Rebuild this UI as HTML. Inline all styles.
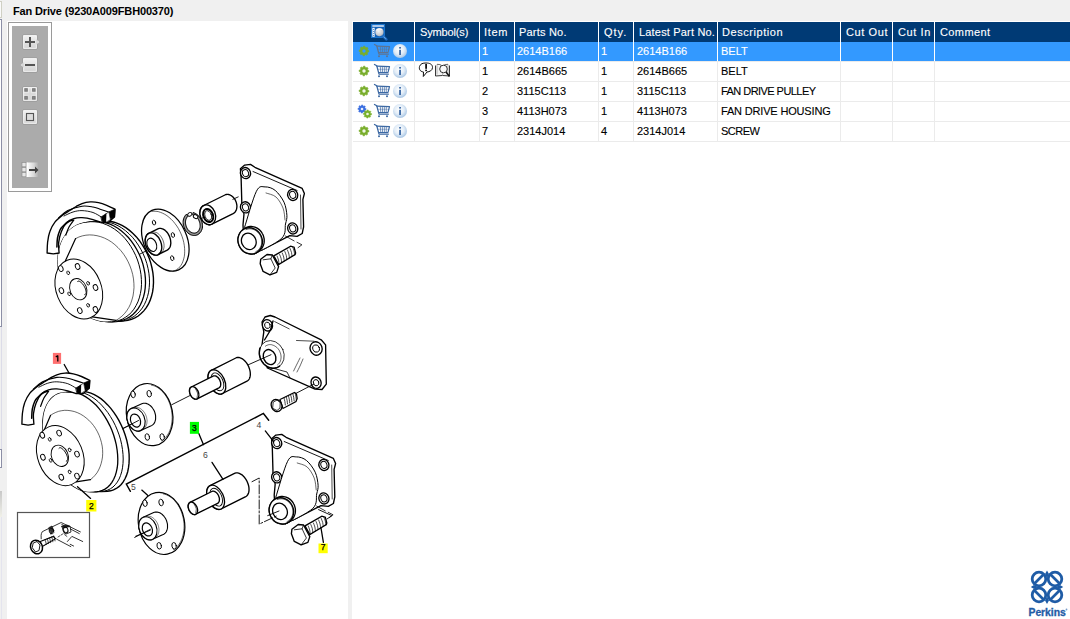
<!DOCTYPE html>
<html><head><meta charset="utf-8">
<style>
*{margin:0;padding:0;box-sizing:border-box}
html,body{width:1070px;height:619px;overflow:hidden;background:#f0f0f0;font-family:"Liberation Sans",sans-serif}
.a{position:absolute}
#title{left:13px;top:5px;font-weight:bold;font-size:11px;letter-spacing:-0.15px;color:#000;white-space:nowrap;line-height:13px}
#lp{left:7px;top:21px;width:341px;height:598px;background:#fff}
#rp{left:352px;top:21px;width:718px;height:598px;background:#fff}
#tb{left:8px;top:22px;width:44px;height:170px;border:1px solid #9a9a9a;background:#fff}
#tbg{left:12px;top:26px;width:36px;height:162px;background:#ababab}
.hdr{left:353px;top:22px;width:717px;height:20px;background:#003a75}
.sel{left:353px;top:42px;width:717px;height:19px;background:#3399ff}
.hl{position:absolute;height:1px;left:353px;width:717px;background:#ebebeb}
.vl{position:absolute;width:1px;background:#ebebeb}
.vw{position:absolute;width:1px;background:#e6ecf3}
.th{position:absolute;top:22px;color:#fff;font-size:11px;line-height:20px;white-space:nowrap;-webkit-text-stroke:0.12px #fff}
.td{position:absolute;color:#000;font-size:11px;line-height:19px;white-space:nowrap;-webkit-text-stroke:0.12px currentColor}
.w{color:#fff}
</style></head><body>
<div class="a" style="left:0;top:1px;width:2px;height:17px;border:1px solid #d0d0c4;border-left:none;background:#fafafa"></div>
<div class="a" style="left:0;top:19px;width:2px;height:308px;border-right:1px solid #8c8fa6;border-top:1px solid #8c8fa6;border-bottom:1px solid #8c8fa6;background:#fff"></div>
<div class="a" style="left:1px;top:327px;width:1px;height:123px;background:#dcdce8"></div>
<div class="a" style="left:0;top:449px;width:2px;height:19px;border:1px solid #8c8fa6;border-left:none;background:#fff"></div>
<div class="a" style="left:0;top:491px;width:2px;height:26px;background:linear-gradient(#c8c8c8,#f0f0e8)"></div>
<div class="a" style="left:1px;top:517px;width:1px;height:102px;background:#e4e4ee"></div>
<div id="title" class="a">Fan Drive (9230A009FBH00370)</div>
<div id="lp" class="a"></div>
<div id="rp" class="a"></div>
<svg class="a" style="left:0;top:0" width="350" height="619" viewBox="0 0 350 619" stroke="#000" stroke-linecap="round"><path d="M102.4,220.9 L106.3,220.8 L110.2,221.3 L114.2,222.2 L118.1,223.6 L122.0,225.4 L125.8,227.7 L129.5,230.4 L133.0,233.5 L136.4,236.9 L139.5,240.7 L142.3,244.8 L144.9,249.1 L147.2,253.6 L149.2,258.3 L150.8,263.1 L152.0,268.0 L152.9,272.9 L153.4,277.8 L153.5,282.6 L153.2,287.4 L152.6,291.9 L151.5,296.3 L150.1,300.4 L148.4,304.2 L146.3,307.7 L143.8,310.9 L141.1,313.6 L138.2,316.0 L134.9,317.9 L131.5,319.4 L127.9,320.4 L124.2,320.9 L120.2,321.2 L116.3,321.3 L112.4,320.8 L108.4,319.9 L104.5,318.5 L100.6,316.7 L96.8,314.4 L93.1,311.7 L89.6,308.6 L86.2,305.2 L83.1,301.4 L80.3,297.3 L77.7,293.0 L75.4,288.5 L73.4,283.8 L71.8,279.0 L70.6,274.1 L69.7,269.2 L69.2,264.3 L69.1,259.5 L69.4,254.7 L70.0,250.2 L71.1,245.8 L72.5,241.7 L74.2,237.9 L76.3,234.4 L78.8,231.2 L81.5,228.5 L84.4,226.1 L87.7,224.2 L91.1,222.7 L94.7,221.7 L98.4,221.2Z" fill="#fff" stroke-width="1.4" /><path d="M98.4,221.2 L102.3,221.1 L106.2,221.6 L110.2,222.5 L114.1,223.9 L118.0,225.7 L121.8,228.0 L125.5,230.7 L129.0,233.8 L132.4,237.2 L135.5,241.0 L138.3,245.1 L140.9,249.4 L143.2,253.9 L145.2,258.6 L146.8,263.4 L148.0,268.3 L148.9,273.2 L149.4,278.1 L149.5,282.9 L149.2,287.7 L148.6,292.2 L147.5,296.6 L146.1,300.7 L144.4,304.5 L142.3,308.0 L139.8,311.2 L137.1,313.9 L134.2,316.3 L130.9,318.2 L127.5,319.7 L123.9,320.7 L120.2,321.2 L116.2,321.5 L112.3,321.6 L108.4,321.1 L104.4,320.2 L100.5,318.8 L96.6,317.0 L92.8,314.7 L89.1,312.0 L85.6,308.9 L82.2,305.5 L79.1,301.7 L76.3,297.6 L73.7,293.3 L71.4,288.8 L69.4,284.1 L67.8,279.3 L66.6,274.4 L65.7,269.5 L65.2,264.6 L65.1,259.8 L65.4,255.0 L66.0,250.5 L67.1,246.1 L68.5,242.0 L70.2,238.2 L72.3,234.7 L74.8,231.5 L77.5,228.8 L80.4,226.4 L83.7,224.5 L87.1,223.0 L90.7,222.0 L94.4,221.5Z" fill="#fff" stroke-width="1.0" /><path d="M94.4,221.5 L98.3,221.4 L102.2,221.9 L106.2,222.8 L110.1,224.2 L114.0,226.0 L117.8,228.3 L121.5,231.0 L125.0,234.1 L128.4,237.5 L131.5,241.3 L134.3,245.4 L136.9,249.7 L139.2,254.2 L141.2,258.9 L142.8,263.7 L144.0,268.6 L144.9,273.5 L145.4,278.4 L145.5,283.2 L145.2,288.0 L144.6,292.5 L143.5,296.9 L142.1,301.0 L140.4,304.8 L138.3,308.3 L135.8,311.5 L133.1,314.2 L130.2,316.6 L126.9,318.5 L123.5,320.0 L119.9,321.0 L116.2,321.5 L112.2,321.8 L108.3,321.9 L104.4,321.4 L100.4,320.5 L96.5,319.1 L92.6,317.3 L88.8,315.0 L85.1,312.3 L81.6,309.2 L78.2,305.8 L75.1,302.0 L72.3,297.9 L69.7,293.6 L67.4,289.1 L65.4,284.4 L63.8,279.6 L62.6,274.7 L61.7,269.8 L61.2,264.9 L61.1,260.1 L61.4,255.3 L62.0,250.8 L63.1,246.4 L64.5,242.3 L66.2,238.5 L68.3,235.0 L70.8,231.8 L73.5,229.1 L76.4,226.7 L79.7,224.8 L83.1,223.3 L86.7,222.3 L90.4,221.8Z" fill="#fff" stroke-width="1.3" /><path d="M91.1,221.8 L94.9,221.8 L98.9,222.3 L102.8,223.3 L106.7,224.8 L110.6,226.7 L114.4,229.0 L118.1,231.8 L121.6,234.9 L124.9,238.4 L128.0,242.3 L130.8,246.4 L133.3,250.7 L135.6,255.3 L137.5,260.0 L139.0,264.8 L140.2,269.7 L141.0,274.6 L141.4,279.5 L141.5,284.3 L141.2,289.0 L140.4,293.6 L139.3,297.9 L137.9,301.9 L136.0,305.7 L133.9,309.2 L131.4,312.3 L128.7,315.0 L125.6,317.2 L122.4,319.1 L118.9,320.5 L115.3,321.4 L111.5,321.8 L107.7,321.6 L103.8,321.5 L100.0,321.0 L96.1,320.0 L92.2,318.6 L88.4,316.7 L84.6,314.3 L81.0,311.6 L77.5,308.5 L74.3,305.0 L71.2,301.2 L68.4,297.1 L65.9,292.8 L63.7,288.3 L61.8,283.7 L60.3,278.9 L59.1,274.0 L58.3,269.2 L57.8,264.3 L57.8,259.5 L58.1,254.9 L58.8,250.4 L59.9,246.1 L61.4,242.1 L63.2,238.4 L65.3,235.0 L67.7,231.9 L70.4,229.2 L73.4,227.0 L76.6,225.2 L80.0,223.8 L83.6,222.9 L87.3,222.4Z" fill="#fff" stroke-width="1.0" /><ellipse cx="97.5" cy="272" rx="37.5" ry="51.3" transform="rotate(-22 97.5 272)" fill="#fff" stroke="none"/><path d="M75.6,238.6 L78.9,237.0 L82.3,235.9 L85.9,235.2 L89.6,234.9 L93.3,235.1 L97.0,235.7 L100.8,236.7 L104.5,238.1 L108.1,239.9 L111.6,242.1 L114.9,244.7 L118.0,247.6 L121.0,250.8 L123.7,254.3 L126.1,258.0 L128.2,261.9 L130.0,266.0 L131.5,270.2 L132.7,274.5 L133.5,278.9 L133.9,283.3 L134.0,287.6 L133.6,291.9 L133.0,296.0 L131.9,300.0 L130.6,303.8 L128.9,307.3 L126.8,310.6 L124.5,313.6 L121.9,316.2 L119.0,318.5 L116.0,320.4 L92.3,316.9 L90.3,317.8 L88.2,318.5 L86.0,318.9 L83.7,318.9 L81.4,318.8 L79.0,318.3 L76.7,317.5 L74.4,316.5 L72.1,315.2 L69.9,313.6 L67.8,311.8 L65.7,309.8 L63.8,307.6 L62.1,305.2 L60.5,302.7 L59.1,300.0 L57.9,297.2 L56.8,294.4 L56.0,291.5 L55.4,288.5 L55.1,285.6 L54.9,282.7 L55.0,279.8 L55.3,277.1 L55.9,274.5 L56.6,272.0 L57.6,269.6 L58.8,267.5 L60.2,265.5 L61.7,263.8 L63.5,262.4 L65.3,261.1Z" fill="#fff" stroke="none"/><path d="M75.6,238.6 L78.9,237.0 L82.3,235.9 L85.9,235.2 L89.6,234.9 L93.3,235.1 L97.0,235.7 L100.8,236.7 L104.5,238.1 L108.1,239.9 L111.6,242.1 L114.9,244.7 L118.0,247.6 L121.0,250.8 L123.7,254.3 L126.1,258.0 L128.2,261.9 L130.0,266.0 L131.5,270.2 L132.7,274.5 L133.5,278.9 L133.9,283.3 L134.0,287.6 L133.6,291.9 L133.0,296.0 L131.9,300.0 L130.6,303.8 L128.9,307.3 L126.8,310.6 L124.5,313.6 L121.9,316.2 L119.0,318.5 L116.0,320.4" fill="none" stroke-width="0.6" /><path d="M116.0,320.4 L92.3,316.9" fill="none" stroke-width="1.2" /><path d="M65.3,261.1 L75.6,238.6" fill="none" stroke-width="1.2" /><ellipse cx="78.8" cy="289" rx="22.5" ry="31" transform="rotate(-22 78.8 289)" fill="#fff" stroke-width="1.0" /><ellipse cx="78.3" cy="289.2" rx="8.3" ry="11" transform="rotate(-22 78.3 289.2)" fill="#fff" stroke-width="0.9" /><path d="M77.5,281.7 L77.8,281.4 L78.2,281.2 L78.7,281.1 L79.2,281.2 L79.8,281.5 L80.4,281.9 L81.0,282.4 L81.7,283.0 L82.4,283.7 L83.0,284.5 L83.6,285.4 L84.2,286.3 L84.7,287.3 L85.2,288.2 L85.5,289.2 L85.8,290.1 L86.0,291.0 L86.1,291.8 L86.2,292.5 L86.1,293.2 L85.9,293.7 L85.6,294.1 L85.3,294.3 L84.8,294.5" fill="none" stroke-width="1.0" /><ellipse cx="60.8" cy="268.6" rx="2.2" ry="3.0" transform="rotate(-22 60.8 268.6)" fill="#fff" stroke-width="0.9" /><ellipse cx="77.6" cy="266.5" rx="2.2" ry="3.0" transform="rotate(-22 77.6 266.5)" fill="#fff" stroke-width="0.9" /><ellipse cx="61.4" cy="290.6" rx="2.2" ry="3.0" transform="rotate(-22 61.4 290.6)" fill="#fff" stroke-width="0.9" /><ellipse cx="95.5" cy="287.5" rx="2.2" ry="3.0" transform="rotate(-22 95.5 287.5)" fill="#fff" stroke-width="0.9" /><ellipse cx="79.8" cy="310.6" rx="2.2" ry="3.0" transform="rotate(-22 79.8 310.6)" fill="#fff" stroke-width="0.9" /><ellipse cx="95.5" cy="309.5" rx="2.2" ry="3.0" transform="rotate(-22 95.5 309.5)" fill="#fff" stroke-width="0.9" /><ellipse cx="68.2" cy="272.8" rx="1.3" ry="1.9" transform="rotate(-22 68.2 272.8)" fill="#fff" stroke-width="0.8" /><ellipse cx="88.1" cy="283.3" rx="1.3" ry="1.9" transform="rotate(-22 88.1 283.3)" fill="#fff" stroke-width="0.8" /><ellipse cx="69.2" cy="293.8" rx="1.3" ry="1.9" transform="rotate(-22 69.2 293.8)" fill="#fff" stroke-width="0.8" /><ellipse cx="88.1" cy="305.3" rx="1.3" ry="1.9" transform="rotate(-22 88.1 305.3)" fill="#fff" stroke-width="0.8" /><path d="M80.9,391.4 L84.2,391.5 L87.5,392.1 L90.9,393.1 L94.3,394.6 L97.8,396.6 L101.2,398.9 L104.5,401.7 L107.7,404.9 L110.8,408.4 L113.8,412.3 L116.5,416.4 L119.0,420.7 L121.3,425.3 L123.4,430.0 L125.1,434.8 L126.6,439.7 L127.7,444.6 L128.6,449.4 L129.1,454.2 L129.2,458.9 L129.0,463.4 L128.5,467.7 L127.7,471.7 L126.5,475.4 L125.0,478.8 L123.2,481.9 L121.2,484.5 L118.9,486.7 L116.3,488.5 L113.5,489.9 L110.6,490.8 L107.5,491.2 L101.5,491.5 L98.2,491.4 L94.9,490.8 L91.5,489.8 L88.1,488.3 L84.6,486.3 L81.2,484.0 L77.9,481.2 L74.7,478.0 L71.6,474.5 L68.6,470.6 L65.9,466.5 L63.4,462.2 L61.1,457.6 L59.0,452.9 L57.3,448.1 L55.8,443.2 L54.7,438.3 L53.8,433.5 L53.3,428.7 L53.2,424.0 L53.4,419.5 L53.9,415.2 L54.7,411.2 L55.9,407.5 L57.4,404.1 L59.2,401.0 L61.2,398.4 L63.5,396.2 L66.1,394.4 L68.9,393.0 L71.8,392.1 L74.9,391.7Z" fill="#fff" stroke-width="1.4" /><path d="M74.8,391.7 L78.0,391.8 L81.4,392.4 L84.8,393.4 L88.2,394.9 L91.6,396.8 L95.0,399.1 L98.4,401.9 L101.6,405.1 L104.7,408.6 L107.7,412.4 L110.4,416.5 L113.0,420.9 L115.3,425.4 L117.3,430.1 L119.1,434.9 L120.6,439.8 L121.7,444.7 L122.5,449.6 L123.0,454.4 L123.2,459.0 L123.0,463.5 L122.5,467.8 L121.7,471.8 L120.5,475.6 L119.1,479.0 L117.3,482.1 L115.3,484.7 L113.0,487.0 L110.4,488.8 L107.7,490.1 L104.7,491.0 L101.6,491.5 L96.2,491.8 L93.0,491.7 L89.6,491.1 L86.2,490.1 L82.8,488.6 L79.4,486.7 L76.0,484.4 L72.6,481.6 L69.4,478.4 L66.3,474.9 L63.3,471.1 L60.6,467.0 L58.0,462.6 L55.7,458.1 L53.7,453.4 L51.9,448.6 L50.4,443.7 L49.3,438.8 L48.5,433.9 L48.0,429.1 L47.8,424.5 L48.0,420.0 L48.5,415.7 L49.3,411.7 L50.5,407.9 L51.9,404.5 L53.7,401.4 L55.7,398.8 L58.0,396.5 L60.6,394.7 L63.3,393.4 L66.3,392.5 L69.4,392.0Z" fill="#fff" stroke-width="1.0" /><path d="M69.4,392.0 L72.6,392.1 L75.9,392.6 L79.3,393.7 L82.8,395.1 L86.2,397.1 L89.6,399.4 L92.9,402.2 L96.2,405.3 L99.3,408.8 L102.2,412.6 L105.0,416.8 L107.5,421.1 L109.8,425.6 L111.9,430.3 L113.7,435.2 L115.1,440.0 L116.3,444.9 L117.1,449.8 L117.6,454.6 L117.8,459.3 L117.7,463.8 L117.2,468.0 L116.3,472.1 L115.2,475.8 L113.7,479.3 L111.9,482.3 L109.9,485.0 L107.6,487.2 L105.0,489.1 L102.3,490.4 L99.3,491.3 L96.2,491.8 L90.9,491.8 L87.7,491.7 L84.4,491.2 L81.0,490.2 L77.6,488.7 L74.2,486.8 L70.8,484.4 L67.5,481.7 L64.3,478.5 L61.2,475.0 L58.3,471.2 L55.6,467.2 L53.0,462.8 L50.7,458.3 L48.7,453.6 L46.9,448.9 L45.5,444.0 L44.3,439.1 L43.5,434.3 L43.0,429.5 L42.8,424.9 L42.9,420.4 L43.4,416.2 L44.2,412.2 L45.4,408.4 L46.8,405.0 L48.6,402.0 L50.6,399.3 L52.9,397.1 L55.4,395.3 L58.1,393.9 L61.0,393.1 L64.1,392.6Z" fill="#fff" stroke-width="1.3" /><ellipse cx="77.5" cy="442.2" rx="31" ry="52" transform="rotate(-22 77.5 442.2)" fill="#fff" stroke="none"/><path d="M50.5,415.4 L53.1,413.7 L55.8,412.4 L58.7,411.3 L61.7,410.7 L64.7,410.3 L67.9,410.4 L71.0,410.8 L74.2,411.5 L77.3,412.6 L80.3,414.0 L83.3,415.8 L86.1,417.9 L88.8,420.2 L91.3,422.8 L93.6,425.6 L95.7,428.7 L97.5,431.9 L99.1,435.3 L100.4,438.8 L101.4,442.4 L102.2,446.1 L102.6,449.7 L102.7,453.3 L102.5,456.9 L101.9,460.4 L101.1,463.7 L100.0,466.9 L98.6,470.0 L97.0,472.8 L95.0,475.3 L92.9,477.6 L90.5,479.6 L76.0,481.9 L74.2,483.2 L72.2,484.2 L70.1,484.9 L68.0,485.4 L65.7,485.6 L63.4,485.4 L61.1,485.0 L58.7,484.3 L56.4,483.3 L54.1,482.1 L51.9,480.6 L49.7,478.9 L47.7,476.9 L45.7,474.7 L44.0,472.4 L42.3,469.9 L40.9,467.2 L39.6,464.5 L38.5,461.6 L37.7,458.7 L37.0,455.8 L36.6,452.8 L36.4,449.9 L36.5,447.1 L36.7,444.3 L37.2,441.6 L38.0,439.1 L38.9,436.7 L40.0,434.5 L41.4,432.6 L42.9,430.8 L44.6,429.3Z" fill="#fff" stroke="none"/><path d="M50.5,415.4 L53.1,413.7 L55.8,412.4 L58.7,411.3 L61.7,410.7 L64.7,410.3 L67.9,410.4 L71.0,410.8 L74.2,411.5 L77.3,412.6 L80.3,414.0 L83.3,415.8 L86.1,417.9 L88.8,420.2 L91.3,422.8 L93.6,425.6 L95.7,428.7 L97.5,431.9 L99.1,435.3 L100.4,438.8 L101.4,442.4 L102.2,446.1 L102.6,449.7 L102.7,453.3 L102.5,456.9 L101.9,460.4 L101.1,463.7 L100.0,466.9 L98.6,470.0 L97.0,472.8 L95.0,475.3 L92.9,477.6 L90.5,479.6" fill="none" stroke-width="0.6" /><path d="M90.5,479.6 L76.0,481.9" fill="none" stroke-width="1.2" /><path d="M44.6,429.3 L50.5,415.4" fill="none" stroke-width="1.2" /><ellipse cx="60.3" cy="455.6" rx="22.5" ry="31" transform="rotate(-22 60.3 455.6)" fill="#fff" stroke-width="1.0" /><ellipse cx="59.8" cy="455.8" rx="8.3" ry="11" transform="rotate(-22 59.8 455.8)" fill="#fff" stroke-width="0.9" /><path d="M59.0,448.3 L59.3,448.0 L59.7,447.8 L60.2,447.7 L60.7,447.8 L61.3,448.1 L61.9,448.5 L62.5,449.0 L63.2,449.6 L63.9,450.3 L64.5,451.1 L65.1,452.0 L65.7,452.9 L66.2,453.9 L66.7,454.8 L67.0,455.8 L67.3,456.7 L67.5,457.6 L67.6,458.4 L67.7,459.1 L67.6,459.8 L67.4,460.3 L67.1,460.7 L66.8,460.9 L66.3,461.1" fill="none" stroke-width="1.0" /><ellipse cx="42.3" cy="435.20000000000005" rx="2.2" ry="3.0" transform="rotate(-22 42.3 435.20000000000005)" fill="#fff" stroke-width="0.9" /><ellipse cx="59.099999999999994" cy="433.1" rx="2.2" ry="3.0" transform="rotate(-22 59.099999999999994 433.1)" fill="#fff" stroke-width="0.9" /><ellipse cx="42.9" cy="457.20000000000005" rx="2.2" ry="3.0" transform="rotate(-22 42.9 457.20000000000005)" fill="#fff" stroke-width="0.9" /><ellipse cx="77.0" cy="454.1" rx="2.2" ry="3.0" transform="rotate(-22 77.0 454.1)" fill="#fff" stroke-width="0.9" /><ellipse cx="61.3" cy="477.20000000000005" rx="2.2" ry="3.0" transform="rotate(-22 61.3 477.20000000000005)" fill="#fff" stroke-width="0.9" /><ellipse cx="77.0" cy="476.1" rx="2.2" ry="3.0" transform="rotate(-22 77.0 476.1)" fill="#fff" stroke-width="0.9" /><ellipse cx="49.7" cy="439.40000000000003" rx="1.3" ry="1.9" transform="rotate(-22 49.7 439.40000000000003)" fill="#fff" stroke-width="0.8" /><ellipse cx="69.6" cy="449.90000000000003" rx="1.3" ry="1.9" transform="rotate(-22 69.6 449.90000000000003)" fill="#fff" stroke-width="0.8" /><ellipse cx="50.7" cy="460.40000000000003" rx="1.3" ry="1.9" transform="rotate(-22 50.7 460.40000000000003)" fill="#fff" stroke-width="0.8" /><ellipse cx="69.6" cy="471.90000000000003" rx="1.3" ry="1.9" transform="rotate(-22 69.6 471.90000000000003)" fill="#fff" stroke-width="0.8" /><ellipse cx="165.3" cy="240.1" rx="21.5" ry="32.6" transform="rotate(-24.3 165.3 240.1)" fill="#fff" stroke-width="1.25" /><path d="M151.9,211.4 L153.9,211.2 L156.0,211.3 L158.2,211.6 L160.4,212.3 L162.6,213.2 L164.8,214.3 L167.0,215.7 L169.1,217.4 L171.2,219.3 L173.2,221.3 L175.0,223.6 L176.8,226.0 L178.4,228.5 L179.8,231.2 L181.1,234.0 L182.2,236.8 L183.1,239.7 L183.8,242.6 L184.3,245.5 L184.6,248.4 L184.7,251.2 L184.6,253.9 L184.3,256.5 L183.7,258.9 L183.0,261.2 L182.1,263.4 L181.0,265.3 L179.7,267.0 L178.2,268.5 L176.6,269.7 L174.8,270.7 L173.0,271.4" fill="none" stroke-width="0.6" /><ellipse cx="154" cy="222.6" rx="1.6" ry="2.4" transform="rotate(-15 154 222.6)" fill="#fff" stroke-width="0.9" /><ellipse cx="172.9" cy="235" rx="1.6" ry="2.4" transform="rotate(-15 172.9 235)" fill="#fff" stroke-width="0.9" /><ellipse cx="172.2" cy="258.2" rx="1.6" ry="2.4" transform="rotate(-15 172.2 258.2)" fill="#fff" stroke-width="0.9" /><path d="M157.8,228.9 L158.5,228.6 L159.2,228.4 L160.0,228.4 L160.8,228.4 L161.6,228.6 L162.4,228.8 L163.2,229.2 L164.0,229.6 L164.8,230.1 L165.5,230.8 L166.3,231.5 L167.0,232.3 L167.7,233.2 L168.3,234.1 L168.8,235.1 L169.3,236.1 L169.7,237.1 L170.1,238.2 L170.4,239.3 L170.6,240.4 L170.7,241.5 L170.8,242.6 L170.8,243.6 L170.6,244.6 L170.5,245.5 L170.2,246.4 L169.9,247.2 L169.5,248.0 L169.0,248.6 L168.4,249.2 L167.9,249.7 L167.2,250.1 L158.2,254.6 L157.5,254.9 L156.8,255.1 L156.0,255.1 L155.2,255.1 L154.4,254.9 L153.6,254.7 L152.8,254.3 L152.0,253.9 L151.2,253.4 L150.5,252.7 L149.7,252.0 L149.0,251.2 L148.3,250.3 L147.7,249.4 L147.2,248.4 L146.7,247.4 L146.3,246.4 L145.9,245.3 L145.6,244.2 L145.4,243.1 L145.3,242.0 L145.2,240.9 L145.2,239.9 L145.4,238.9 L145.5,238.0 L145.8,237.1 L146.1,236.3 L146.5,235.5 L147.0,234.9 L147.6,234.3 L148.1,233.8 L148.8,233.4Z" fill="#fff" stroke-width="1.35" /><ellipse cx="153.5" cy="244" rx="7.6" ry="11.6" transform="rotate(-22 153.5 244)" fill="#fff" stroke-width="1.35" /><path d="M151.8,232.3 L152.5,232.1 L153.2,232.0 L153.9,232.0 L154.7,232.1 L155.5,232.3 L156.3,232.5 L157.1,232.9 L157.9,233.4 L158.6,234.0 L159.4,234.7 L160.1,235.4 L160.7,236.2 L161.3,237.1 L161.9,238.0 L162.4,239.0 L162.9,240.0 L163.2,241.1 L163.6,242.1 L163.8,243.2 L164.0,244.2 L164.0,245.3 L164.1,246.3 L164.0,247.3 L163.8,248.2 L163.6,249.1 L163.3,250.0 L163.0,250.7 L162.5,251.4 L162.0,252.0 L161.5,252.5 L160.9,253.0 L160.2,253.3" fill="none" stroke-width="0.6" /><ellipse cx="151.8" cy="244.8" rx="4.6" ry="6.9" transform="rotate(-22 151.8 244.8)" fill="#fff" stroke-width="1.1" /><path d="M193.4,212.7 L194.5,213.0 L195.6,213.5 L196.6,214.2 L197.6,214.9 L198.6,215.8 L199.4,216.8 L200.2,217.9 L200.9,219.1 L201.5,220.3 L201.9,221.6 L202.2,222.9 L202.4,224.3 L202.5,225.6 L202.5,226.9 L202.3,228.2 L202.0,229.4 L201.5,230.5 L201.0,231.6 L200.3,232.5 L199.6,233.4 L198.7,234.1 L197.8,234.7 L196.8,235.1 L195.7,235.4 L194.6,235.5 L193.5,235.5 L192.4,235.3 L191.3,235.0 L190.2,234.6 L189.1,233.9 L188.1,233.2 L187.2,232.3 L186.3,231.4 L185.5,230.3 L184.8,229.1 L184.2,227.9 L183.8,226.6 L183.4,225.3 L183.2,224.0 L183.1,222.6 L183.1,221.3 L183.3,220.0 L183.6,218.8 L184.0,217.7 L184.5,216.6 L185.2,215.6 L185.9,214.8 L186.7,214.0 L188.1,216.1 L187.5,216.7 L187.0,217.3 L186.5,218.1 L186.1,218.9 L185.8,219.8 L185.6,220.8 L185.5,221.8 L185.5,222.8 L185.6,223.8 L185.8,224.9 L186.1,225.9 L186.4,226.9 L186.9,227.9 L187.4,228.8 L188.0,229.7 L188.7,230.4 L189.4,231.1 L190.2,231.7 L191.0,232.2 L191.8,232.6 L192.7,232.9 L193.5,233.0 L194.3,233.1 L195.2,233.0 L195.9,232.8 L196.7,232.4 L197.4,232.0 L198.0,231.4 L198.6,230.8 L199.0,230.1 L199.4,229.2 L199.7,228.3 L200.0,227.4 L200.1,226.4 L200.1,225.4 L200.0,224.3 L199.9,223.3 L199.6,222.3 L199.2,221.2 L198.8,220.3 L198.3,219.3 L197.7,218.5 L197.0,217.7 L196.3,217.0 L195.5,216.4 L194.7,215.9 L193.9,215.4 L193.1,215.2Z" fill="#666" stroke-width="1.0" stroke-linejoin="round"/><path d="M193.8,214.1 L194.8,214.5 L195.7,215.0 L196.6,215.6 L197.4,216.3 L198.2,217.2 L198.9,218.1 L199.5,219.1 L200.1,220.1 L200.5,221.2 L200.9,222.4 L201.1,223.5 L201.3,224.7 L201.3,225.8 L201.2,226.9 L201.1,228.0 L200.8,229.1 L200.4,230.1 L199.9,231.0 L199.4,231.8 L198.7,232.5 L198.0,233.1 L197.2,233.6 L196.3,233.9 L195.4,234.2 L194.5,234.3 L193.6,234.3 L192.6,234.1 L191.7,233.9 L190.7,233.4 L189.8,232.9 L188.9,232.3 L188.1,231.6 L187.3,230.7 L186.6,229.8 L186.0,228.8 L185.5,227.7 L185.0,226.6 L184.7,225.5 L184.5,224.3 L184.3,223.2 L184.3,222.0 L184.4,220.9 L184.6,219.8 L184.9,218.8 L185.3,217.8 L185.7,216.9 L186.3,216.1 L187.0,215.4" fill="none" stroke-width="0.6" stroke="#d0d0d0"/><ellipse cx="189.8" cy="214.3" rx="2.2" ry="1.7" transform="rotate(-30 189.8 214.3)" fill="#fff" stroke-width="0.9" /><ellipse cx="195.6" cy="216.6" rx="2.4" ry="1.8" transform="rotate(30 195.6 216.6)" fill="#fff" stroke-width="0.9" /><path d="M224.9,195.0 L225.6,194.7 L226.3,194.5 L227.0,194.4 L227.8,194.4 L228.5,194.5 L229.3,194.7 L230.1,195.0 L230.8,195.4 L231.6,195.8 L232.3,196.4 L233.0,197.0 L233.6,197.7 L234.2,198.4 L234.8,199.2 L235.3,200.1 L235.7,201.0 L236.1,201.9 L236.4,202.8 L236.6,203.8 L236.8,204.8 L236.9,205.7 L236.9,206.7 L236.8,207.6 L236.7,208.5 L236.5,209.4 L236.2,210.2 L235.8,210.9 L235.4,211.6 L234.9,212.2 L234.4,212.8 L233.8,213.2 L233.1,213.6 L211.9,224.1 L211.2,224.4 L210.5,224.6 L209.8,224.7 L209.0,224.7 L208.3,224.6 L207.5,224.4 L206.7,224.1 L206.0,223.7 L205.2,223.3 L204.5,222.7 L203.8,222.1 L203.2,221.4 L202.6,220.7 L202.0,219.9 L201.5,219.0 L201.1,218.1 L200.7,217.2 L200.4,216.3 L200.2,215.3 L200.0,214.3 L199.9,213.4 L199.9,212.4 L200.0,211.5 L200.1,210.6 L200.3,209.7 L200.6,208.9 L201.0,208.2 L201.4,207.5 L201.9,206.9 L202.4,206.3 L203.0,205.9 L203.7,205.5Z" fill="#fff" stroke-width="1.35" /><ellipse cx="207.8" cy="214.8" rx="7.5" ry="10.2" transform="rotate(-21 207.8 214.8)" fill="#fff" stroke-width="1.35" /><ellipse cx="208.2" cy="215.5" rx="4.8" ry="6.8" transform="rotate(-21 208.2 215.5)" fill="#fff" stroke-width="2.0" /><ellipse cx="208.2" cy="215.5" rx="3.2" ry="5" transform="rotate(-21 208.2 215.5)" fill="#fff" stroke-width="0.8" /><path d="M240.4,168.7 L244.7,165.1 L250.5,164.4 L254.9,167.3 L297.1,186.2 L302.2,188.4 L304.4,193.5 L302.9,199.3 L303.6,226.9 L302.2,233.5 L297.1,236.4 L289.8,235.6 L262.0,250.0 L244.0,244.0 L243.0,225.0 L244.0,213.8 L241.1,208.0 L241.8,202.2 L241.1,177.5Z" fill="#fff" stroke-width="1.35" stroke-linejoin="round"/><path d="M253.0,171.5 L297.1,190.5" fill="none" stroke-width="0.9" /><path d="M300.5,195.0 L301.0,229.0" fill="none" stroke-width="0.7" /><ellipse cx="245.5" cy="173.1" rx="5" ry="5.6" transform="rotate(-20 245.5 173.1)" fill="#fff" stroke-width="1.35" /><ellipse cx="245.5" cy="173.1" rx="3" ry="3.6" transform="rotate(-20 245.5 173.1)" fill="#fff" stroke-width="1.0" /><ellipse cx="292.7" cy="194.9" rx="5" ry="5.6" transform="rotate(-20 292.7 194.9)" fill="#fff" stroke-width="1.35" /><ellipse cx="292.7" cy="194.9" rx="3" ry="3.6" transform="rotate(-20 292.7 194.9)" fill="#fff" stroke-width="1.0" /><ellipse cx="245.5" cy="207.3" rx="5" ry="5.6" transform="rotate(-20 245.5 207.3)" fill="#fff" stroke-width="1.35" /><ellipse cx="245.5" cy="207.3" rx="3" ry="3.6" transform="rotate(-20 245.5 207.3)" fill="#fff" stroke-width="1.0" /><ellipse cx="292.7" cy="228.4" rx="5" ry="5.6" transform="rotate(-20 292.7 228.4)" fill="#fff" stroke-width="1.35" /><ellipse cx="292.7" cy="228.4" rx="3" ry="3.6" transform="rotate(-20 292.7 228.4)" fill="#fff" stroke-width="1.0" /><path d="M244.7,226.9 C246.6,221.0 253.0,198.0 256.4,191.3 C259.8,184.6 262.0,187.0 265.1,186.9 C268.2,186.8 272.2,187.9 275.3,190.5 C278.4,193.1 282.1,198.1 284.0,202.2 C285.9,206.3 286.6,211.7 286.9,215.3 C287.1,218.9 286.4,220.1 285.5,224.0 C284.6,227.9 286.7,233.5 281.5,238.5 C276.3,243.5 258.9,251.4 254.4,254.0Z" fill="#fff" stroke-width="1.0" /><path d="M266.0,193.0 C267.7,193.7 273.2,194.5 276.0,197.0 C278.8,199.5 281.5,204.2 283.0,208.0 C284.5,211.8 284.7,218.0 285.0,220.0" fill="none" stroke-width="0.6" /><path d="M244.6,228.6 L245.6,227.9 L246.7,227.4 L247.8,227.0 L248.9,226.7 L250.1,226.5 L251.3,226.5 L252.5,226.6 L253.7,226.8 L254.9,227.1 L256.0,227.6 L257.1,228.2 L258.2,228.9 L259.2,229.6 L260.1,230.5 L261.0,231.5 L261.8,232.5 L262.4,233.7 L263.0,234.8 L263.5,236.1 L263.8,237.3 L264.1,238.6 L264.2,239.9 L264.2,241.1 L264.1,242.4 L263.9,243.7 L263.5,244.9 L263.1,246.0 L262.5,247.1 L261.9,248.1 L261.1,249.0 L260.3,249.9 L259.4,250.6 L257.6,251.9 L256.6,252.6 L255.5,253.1 L254.4,253.5 L253.3,253.8 L252.1,254.0 L250.9,254.0 L249.7,253.9 L248.5,253.7 L247.3,253.4 L246.2,252.9 L245.1,252.3 L244.0,251.6 L243.0,250.9 L242.1,250.0 L241.2,249.0 L240.4,248.0 L239.8,246.8 L239.2,245.7 L238.7,244.4 L238.4,243.2 L238.1,241.9 L238.0,240.6 L238.0,239.4 L238.1,238.1 L238.3,236.8 L238.7,235.6 L239.1,234.5 L239.7,233.4 L240.3,232.4 L241.1,231.5 L241.9,230.6 L242.8,229.9Z" fill="#fff" stroke-width="1.35" /><ellipse cx="250.2" cy="240.9" rx="12" ry="13.3" transform="rotate(-24 250.2 240.9)" fill="#fff" stroke-width="1.35" /><ellipse cx="248.8" cy="241.35" rx="7.2" ry="8.4" transform="rotate(-24 248.8 241.35)" fill="#fff" stroke-width="1.3" /><path d="M246.0,229.6 L247.0,229.3 L248.0,229.0 L249.0,228.9 L250.1,228.8 L251.2,228.9 L252.2,229.1 L253.3,229.4 L254.3,229.8 L255.3,230.3 L256.2,230.9 L257.1,231.6 L258.0,232.4 L258.7,233.3 L259.4,234.2 L260.1,235.2 L260.6,236.3 L261.0,237.4 L261.3,238.5 L261.6,239.7 L261.7,240.8 L261.7,242.0 L261.7,243.1 L261.5,244.2 L261.2,245.3 L260.8,246.3 L260.3,247.3 L259.8,248.2 L259.1,249.1 L258.4,249.8 L257.6,250.5 L256.7,251.1 L255.8,251.6" fill="none" stroke-width="0.6" /><path d="M285.4,236.0 L294.1,240.9" fill="none" stroke-width="0.8" /><path d="M297.0,242.3 L301.9,244.8 L298.0,247.7" fill="none" stroke-width="0.8" /><path d="M273.8,255.9 L290.7,246.2 L294.1,247.2 L295.6,253.0 L295.1,254.5 L278.6,264.6Z" fill="#fff" stroke-width="1.35" /><path d="M277.0,256.0 C277.2,256.7 278.2,258.7 278.5,260.0 C278.8,261.3 278.9,263.3 279.0,264.0" fill="none" stroke-width="0.7" /><path d="M279.6,254.5 C279.9,255.2 280.8,257.2 281.1,258.5 C281.4,259.8 281.5,261.8 281.6,262.5" fill="none" stroke-width="0.7" /><path d="M282.2,253.0 C282.4,253.7 283.4,255.7 283.7,257.0 C284.0,258.3 284.1,260.3 284.2,261.0" fill="none" stroke-width="0.7" /><path d="M284.8,251.5 C285.1,252.2 286.0,254.2 286.3,255.5 C286.6,256.8 286.7,258.8 286.8,259.5" fill="none" stroke-width="0.7" /><path d="M287.4,250.0 C287.6,250.7 288.6,252.7 288.9,254.0 C289.2,255.3 289.3,257.3 289.4,258.0" fill="none" stroke-width="0.7" /><path d="M290.0,248.5 C290.2,249.2 291.2,251.2 291.5,252.5 C291.8,253.8 291.9,255.8 292.0,256.5" fill="none" stroke-width="0.7" /><path d="M292.6,247.0 C292.9,247.7 293.8,249.7 294.1,251.0 C294.4,252.3 294.5,254.3 294.6,255.0" fill="none" stroke-width="0.7" /><path d="M260.7,259.3 L267.0,254.5 L272.3,255.0 L278.6,266.6 L276.7,272.4 L270.0,274.8 L263.1,271.4 L260.2,263.7Z" fill="#fff" stroke-width="1.35" stroke-linejoin="round"/><path d="M263.1,259.8 L270.9,258.8 L275.2,268.0 L270.0,274.8" fill="none" stroke-width="0.8" /><path d="M270.9,258.8 L272.3,255.0" fill="none" stroke-width="0.8" /><line x1="140" y1="254" x2="146" y2="251" stroke-width="0.9" /><line x1="201.8" y1="218.3" x2="204.5" y2="217" stroke-width="0.9" /><line x1="232.9" y1="199.3" x2="238.2" y2="196.9" stroke-width="0.9" /><path d="M47.1,253.0 C47.2,251.2 47.2,245.9 47.6,242.3 C48.0,238.8 48.5,235.1 49.8,231.7 C51.0,228.3 52.9,224.7 55.1,221.9 C57.3,219.1 60.6,216.7 63.1,214.8 C65.6,212.9 68.0,211.7 70.2,210.3 C72.4,208.9 74.1,207.6 76.1,206.5 C78.1,205.4 79.7,204.4 82.0,203.6 C84.3,202.8 87.5,202.1 90.2,201.9 C93.0,201.7 95.8,202.0 98.5,202.6 C101.2,203.2 104.0,204.2 106.7,205.3 C109.5,206.4 113.6,208.5 115.0,209.2 L114.5,217 L108,222.5 L101.2,222.4 C99.8,221.9 96.2,220.4 93.0,219.6 C89.8,218.8 85.2,217.9 82.0,217.7 C78.8,217.5 76.3,217.8 73.8,218.6 C71.2,219.4 68.8,220.3 66.7,222.5 C64.6,224.7 62.6,228.4 61.3,231.7 C60.0,235.0 59.1,238.8 58.7,242.3 C58.3,245.9 59.0,251.2 59.1,253.0 L53.3,253.9 Z" fill="#fff" stroke-width="1.35" stroke-linejoin="round"/><path d="M58.5,218.0 C60.0,216.8 63.9,212.5 67.8,210.5 C71.7,208.5 77.8,206.8 82.0,206.2 C86.2,205.6 90.0,206.5 93.0,207.0 C96.0,207.5 97.5,208.4 100.1,209.2 C102.7,210.0 107.0,211.4 108.4,211.9" fill="none" stroke-width="1.1" /><path d="M64.0,216.0 C65.5,215.3 70.0,212.9 73.0,212.0 C76.0,211.1 78.7,210.5 82.0,210.6 C85.3,210.7 89.8,211.4 93.0,212.5 C96.2,213.6 99.8,216.2 101.2,216.9" fill="none" stroke-width="0.9" /><path d="M101.2,216.9 L106.3,213.6 L106,222.3 L102.5,222.3 Z" fill="#000" stroke-width="0.8" /><path d="M108.9,211.9 L115,209.2 L114.5,216.8 L110.4,219.6 Z" fill="#000" stroke-width="0.8" /><path d="M106.3,213.6 L108.9,211.9 L110.4,219.6 L106,222.3 Z" fill="#fff" stroke-width="0.6" /><path d="M56.9,247.0 C57.0,245.5 57.0,240.8 57.5,238.0 C58.0,235.2 59.1,232.0 60.0,230.0 C60.9,228.0 61.8,227.3 63.1,226.0 C64.4,224.7 66.4,223.0 68.0,222.0 C69.6,221.0 72.1,220.4 72.9,220.1" fill="none" stroke-width="1.5" /><path d="M65.8,235.2 C66.3,233.8 67.7,229.5 69.0,227.0 C70.3,224.5 73.0,221.2 73.8,220.1" fill="none" stroke-width="1.2" /><g transform="translate(-25.2,171.2)"><path d="M47.1,253.0 C47.2,251.2 47.2,245.9 47.6,242.3 C48.0,238.8 48.5,235.1 49.8,231.7 C51.0,228.3 52.9,224.7 55.1,221.9 C57.3,219.1 60.6,216.7 63.1,214.8 C65.6,212.9 68.0,211.7 70.2,210.3 C72.4,208.9 74.1,207.6 76.1,206.5 C78.1,205.4 79.7,204.4 82.0,203.6 C84.3,202.8 87.5,202.1 90.2,201.9 C93.0,201.7 95.8,202.0 98.5,202.6 C101.2,203.2 104.0,204.2 106.7,205.3 C109.5,206.4 113.6,208.5 115.0,209.2 L114.5,217 L108,222.5 L101.2,222.4 C99.8,221.9 96.2,220.4 93.0,219.6 C89.8,218.8 85.2,217.9 82.0,217.7 C78.8,217.5 76.3,217.8 73.8,218.6 C71.2,219.4 68.8,220.3 66.7,222.5 C64.6,224.7 62.6,228.4 61.3,231.7 C60.0,235.0 59.1,238.8 58.7,242.3 C58.3,245.9 59.0,251.2 59.1,253.0 L53.3,253.9 Z" fill="#fff" stroke-width="1.35" stroke-linejoin="round"/><path d="M58.5,218.0 C60.0,216.8 63.9,212.5 67.8,210.5 C71.7,208.5 77.8,206.8 82.0,206.2 C86.2,205.6 90.0,206.5 93.0,207.0 C96.0,207.5 97.5,208.4 100.1,209.2 C102.7,210.0 107.0,211.4 108.4,211.9" fill="none" stroke-width="1.1" /><path d="M64.0,216.0 C65.5,215.3 70.0,212.9 73.0,212.0 C76.0,211.1 78.7,210.5 82.0,210.6 C85.3,210.7 89.8,211.4 93.0,212.5 C96.2,213.6 99.8,216.2 101.2,216.9" fill="none" stroke-width="0.9" /><path d="M101.2,216.9 L106.3,213.6 L106,222.3 L102.5,222.3 Z" fill="#000" stroke-width="0.8" /><path d="M108.9,211.9 L115,209.2 L114.5,216.8 L110.4,219.6 Z" fill="#000" stroke-width="0.8" /><path d="M106.3,213.6 L108.9,211.9 L110.4,219.6 L106,222.3 Z" fill="#fff" stroke-width="0.6" /><path d="M56.9,247.0 C57.0,245.5 57.0,240.8 57.5,238.0 C58.0,235.2 59.1,232.0 60.0,230.0 C60.9,228.0 61.8,227.3 63.1,226.0 C64.4,224.7 66.4,223.0 68.0,222.0 C69.6,221.0 72.1,220.4 72.9,220.1" fill="none" stroke-width="1.5" /><path d="M65.8,235.2 C66.3,233.8 67.7,229.5 69.0,227.0 C70.3,224.5 73.0,221.2 73.8,220.1" fill="none" stroke-width="1.2" /></g><ellipse cx="149.6" cy="414.6" rx="23" ry="31.3" transform="rotate(-10.5 149.6 414.6)" fill="#fff" stroke-width="1.2" /><path d="M151.4,385.1 L153.1,385.5 L154.8,386.1 L156.4,386.9 L158.1,387.9 L159.6,389.0 L161.2,390.3 L162.6,391.8 L164.0,393.4 L165.3,395.1 L166.6,397.0 L167.7,399.0 L168.7,401.1 L169.6,403.3 L170.3,405.5 L171.0,407.8 L171.5,410.2 L171.8,412.5 L172.1,414.9 L172.2,417.3 L172.1,419.6 L171.9,421.9 L171.6,424.2 L171.1,426.4 L170.5,428.5 L169.8,430.5 L169.0,432.4 L168.0,434.1 L166.9,435.8 L165.8,437.3 L164.5,438.6 L163.1,439.8 L161.7,440.8" fill="none" stroke-width="0.6" /><ellipse cx="133.1" cy="394.4" rx="2.2" ry="3.3" transform="rotate(-10.5 133.1 394.4)" fill="#fff" stroke-width="0.9" /><ellipse cx="149.2" cy="393.7" rx="2.2" ry="3.3" transform="rotate(-10.5 149.2 393.7)" fill="#fff" stroke-width="0.9" /><ellipse cx="147.3" cy="437" rx="2.2" ry="3.3" transform="rotate(-10.5 147.3 437)" fill="#fff" stroke-width="0.9" /><ellipse cx="162.2" cy="437" rx="2.2" ry="3.3" transform="rotate(-10.5 162.2 437)" fill="#fff" stroke-width="0.9" /><path d="M141.8,403.8 L142.6,403.5 L143.4,403.3 L144.3,403.2 L145.2,403.3 L146.1,403.4 L147.0,403.7 L147.8,404.0 L148.7,404.5 L149.6,405.1 L150.4,405.7 L151.2,406.5 L152.0,407.3 L152.6,408.2 L153.3,409.2 L153.9,410.2 L154.4,411.3 L154.8,412.4 L155.1,413.5 L155.4,414.6 L155.6,415.8 L155.6,416.9 L155.6,418.0 L155.6,419.1 L155.4,420.1 L155.1,421.1 L154.8,422.0 L154.4,422.9 L153.9,423.7 L153.3,424.3 L152.6,424.9 L152.0,425.4 L151.2,425.8 L140.7,430.5 L139.9,430.8 L139.1,431.0 L138.2,431.1 L137.3,431.0 L136.4,430.9 L135.5,430.6 L134.7,430.3 L133.8,429.8 L132.9,429.2 L132.1,428.6 L131.3,427.8 L130.5,427.0 L129.9,426.1 L129.2,425.1 L128.6,424.1 L128.1,423.0 L127.7,421.9 L127.4,420.8 L127.1,419.7 L126.9,418.5 L126.9,417.4 L126.9,416.3 L126.9,415.2 L127.1,414.2 L127.4,413.2 L127.7,412.3 L128.1,411.4 L128.6,410.6 L129.2,410.0 L129.9,409.4 L130.5,408.9 L131.3,408.5Z" fill="#fff" stroke-width="1.1" /><ellipse cx="136" cy="419.5" rx="8.6" ry="12" transform="rotate(-22 136 419.5)" fill="#fff" stroke-width="1.1" /><path d="M134.2,407.8 L135.0,407.6 L135.8,407.4 L136.6,407.4 L137.4,407.5 L138.2,407.7 L139.1,407.9 L139.9,408.3 L140.7,408.8 L141.5,409.4 L142.3,410.0 L143.0,410.8 L143.7,411.6 L144.4,412.5 L144.9,413.4 L145.5,414.4 L145.9,415.4 L146.3,416.5 L146.6,417.5 L146.8,418.6 L147.0,419.7 L147.1,420.7 L147.0,421.8 L146.9,422.8 L146.8,423.8 L146.5,424.7 L146.2,425.5 L145.8,426.3 L145.3,427.0 L144.7,427.6 L144.1,428.2 L143.5,428.6 L142.8,429.0" fill="none" stroke-width="0.5" /><ellipse cx="135.5" cy="420.6" rx="4.8" ry="6.8" transform="rotate(-22 135.5 420.6)" fill="#fff" stroke-width="1.2" /><line x1="122.8" y1="428.6" x2="138.5" y2="420.5" stroke-width="0.9" /><g transform="translate(11.9,108.8)"><ellipse cx="149.6" cy="414.6" rx="23" ry="31.3" transform="rotate(-10.5 149.6 414.6)" fill="#fff" stroke-width="1.2" /><path d="M151.4,385.1 L153.1,385.5 L154.8,386.1 L156.4,386.9 L158.1,387.9 L159.6,389.0 L161.2,390.3 L162.6,391.8 L164.0,393.4 L165.3,395.1 L166.6,397.0 L167.7,399.0 L168.7,401.1 L169.6,403.3 L170.3,405.5 L171.0,407.8 L171.5,410.2 L171.8,412.5 L172.1,414.9 L172.2,417.3 L172.1,419.6 L171.9,421.9 L171.6,424.2 L171.1,426.4 L170.5,428.5 L169.8,430.5 L169.0,432.4 L168.0,434.1 L166.9,435.8 L165.8,437.3 L164.5,438.6 L163.1,439.8 L161.7,440.8" fill="none" stroke-width="0.6" /><ellipse cx="133.1" cy="394.4" rx="2.2" ry="3.3" transform="rotate(-10.5 133.1 394.4)" fill="#fff" stroke-width="0.9" /><ellipse cx="149.2" cy="393.7" rx="2.2" ry="3.3" transform="rotate(-10.5 149.2 393.7)" fill="#fff" stroke-width="0.9" /><ellipse cx="147.3" cy="437" rx="2.2" ry="3.3" transform="rotate(-10.5 147.3 437)" fill="#fff" stroke-width="0.9" /><ellipse cx="162.2" cy="437" rx="2.2" ry="3.3" transform="rotate(-10.5 162.2 437)" fill="#fff" stroke-width="0.9" /><path d="M141.8,403.8 L142.6,403.5 L143.4,403.3 L144.3,403.2 L145.2,403.3 L146.1,403.4 L147.0,403.7 L147.8,404.0 L148.7,404.5 L149.6,405.1 L150.4,405.7 L151.2,406.5 L152.0,407.3 L152.6,408.2 L153.3,409.2 L153.9,410.2 L154.4,411.3 L154.8,412.4 L155.1,413.5 L155.4,414.6 L155.6,415.8 L155.6,416.9 L155.6,418.0 L155.6,419.1 L155.4,420.1 L155.1,421.1 L154.8,422.0 L154.4,422.9 L153.9,423.7 L153.3,424.3 L152.6,424.9 L152.0,425.4 L151.2,425.8 L140.7,430.5 L139.9,430.8 L139.1,431.0 L138.2,431.1 L137.3,431.0 L136.4,430.9 L135.5,430.6 L134.7,430.3 L133.8,429.8 L132.9,429.2 L132.1,428.6 L131.3,427.8 L130.5,427.0 L129.9,426.1 L129.2,425.1 L128.6,424.1 L128.1,423.0 L127.7,421.9 L127.4,420.8 L127.1,419.7 L126.9,418.5 L126.9,417.4 L126.9,416.3 L126.9,415.2 L127.1,414.2 L127.4,413.2 L127.7,412.3 L128.1,411.4 L128.6,410.6 L129.2,410.0 L129.9,409.4 L130.5,408.9 L131.3,408.5Z" fill="#fff" stroke-width="1.1" /><ellipse cx="136" cy="419.5" rx="8.6" ry="12" transform="rotate(-22 136 419.5)" fill="#fff" stroke-width="1.1" /><path d="M134.2,407.8 L135.0,407.6 L135.8,407.4 L136.6,407.4 L137.4,407.5 L138.2,407.7 L139.1,407.9 L139.9,408.3 L140.7,408.8 L141.5,409.4 L142.3,410.0 L143.0,410.8 L143.7,411.6 L144.4,412.5 L144.9,413.4 L145.5,414.4 L145.9,415.4 L146.3,416.5 L146.6,417.5 L146.8,418.6 L147.0,419.7 L147.1,420.7 L147.0,421.8 L146.9,422.8 L146.8,423.8 L146.5,424.7 L146.2,425.5 L145.8,426.3 L145.3,427.0 L144.7,427.6 L144.1,428.2 L143.5,428.6 L142.8,429.0" fill="none" stroke-width="0.5" /><ellipse cx="135.5" cy="420.6" rx="4.8" ry="6.8" transform="rotate(-22 135.5 420.6)" fill="#fff" stroke-width="1.2" /><line x1="122.8" y1="428.6" x2="138.5" y2="420.5" stroke-width="0.9" /></g><line x1="122.8" y1="428.6" x2="131" y2="424.5" stroke-width="0.9" /><line x1="171.8" y1="404.7" x2="194" y2="393.5" stroke-width="0.9" /><path d="M265.0,317.0 L270.3,315.5 L275.0,317.0 L321.2,339.8 L325.6,344.9 L326.3,384.1 L322.0,389.5 L315.0,389.2 L267.4,368.0 L262.0,345.0 L263.8,331.8 L262.0,322.0Z" fill="#fff" stroke-width="1.35" stroke-linejoin="round"/><ellipse cx="267.4" cy="325.3" rx="5" ry="5.8" transform="rotate(-20 267.4 325.3)" fill="#fff" stroke-width="1.35" /><ellipse cx="267.4" cy="325.3" rx="2.75" ry="3.19" transform="rotate(-20 267.4 325.3)" fill="#fff" stroke-width="0.9" /><ellipse cx="316.1" cy="348.5" rx="6" ry="6.8" transform="rotate(-20 316.1 348.5)" fill="#fff" stroke-width="1.35" /><ellipse cx="316.1" cy="348.5" rx="3.3000000000000003" ry="3.74" transform="rotate(-20 316.1 348.5)" fill="#fff" stroke-width="0.9" /><ellipse cx="316.1" cy="382.7" rx="5" ry="5.8" transform="rotate(-20 316.1 382.7)" fill="#fff" stroke-width="1.35" /><ellipse cx="316.1" cy="382.7" rx="2.75" ry="3.19" transform="rotate(-20 316.1 382.7)" fill="#fff" stroke-width="0.9" /><path d="M264.5,340.0 L270.5,330.0 L273.0,321.0" fill="none" stroke-width="1.35" /><path d="M267.4,366.7 L287.0,372.0 L290.0,378.0" fill="none" stroke-width="0.8" /><path d="M274.7,321.6 L289.2,328.9" fill="none" stroke-width="0.7" /><path d="M296.5,340.5 L314.0,341.2" fill="none" stroke-width="0.7" /><path d="M293.6,371.0 C294.2,369.8 295.9,366.2 297.0,364.0 C298.1,361.8 299.5,359.0 300.0,358.0" fill="none" stroke-width="0.6" /><path d="M297.0,372.0 C297.5,371.0 299.0,368.2 300.0,366.0 C301.0,363.8 302.5,360.2 303.0,359.0" fill="none" stroke-width="0.6" /><ellipse cx="271.8" cy="354.4" rx="12.1" ry="14.2" transform="rotate(-25 271.8 354.4)" fill="#fff" stroke-width="0.7" /><path d="M279.6,366.2 L278.8,366.7 L277.9,367.2 L277.0,367.6 L276.1,367.9 L275.1,368.1 L274.1,368.2 L273.1,368.2 L272.1,368.2 L271.0,368.0 L270.0,367.8 L269.0,367.4 L268.0,367.0 L267.1,366.5 L266.1,365.9 L265.2,365.2 L264.4,364.5 L263.6,363.7 L262.9,362.8 L262.2,361.9 L261.6,360.9 L261.0,359.9 L260.5,358.8 L260.1,357.7 L259.8,356.6 L259.6,355.5 L259.4,354.4 L259.3,353.2 L259.3,352.1 L259.4,351.0 L259.6,349.9 L259.8,348.8 L260.2,347.8" fill="none" stroke-width="1.5" /><path d="M265.4,346.2 L266.1,345.7 L266.9,345.3 L267.8,345.0 L268.7,344.7 L269.6,344.6 L270.5,344.6 L271.5,344.7 L272.4,345.0 L273.3,345.3 L274.2,345.7 L275.1,346.2 L276.0,346.8 L276.8,347.4 L277.6,348.2 L278.3,349.0 L278.9,349.9 L279.5,350.8 L279.9,351.8 L280.3,352.9 L280.7,353.9 L280.9,355.0 L281.0,356.0 L281.1,357.1 L281.0,358.1 L280.9,359.2 L280.7,360.1 L280.4,361.1 L280.0,362.0 L279.5,362.8 L278.9,363.6 L278.3,364.2 L277.6,364.8" fill="none" stroke-width="0.6" /><ellipse cx="269.6" cy="357.1" rx="6" ry="7.8" transform="rotate(-25 269.6 357.1)" fill="#fff" stroke-width="1.4" /><line x1="314" y1="384" x2="289" y2="397" stroke-width="0.9" /><line x1="241" y1="368" x2="271" y2="354.7" stroke-width="0.9" /><path d="M280.0,399.5 L294.5,392.5 L296.5,394.0 L297.2,398.5 L296.0,401.5 L283.0,408.5Z" fill="#fff" stroke-width="1.2" /><path d="M284.0,398.0 C284.1,398.6 284.7,400.3 284.9,401.5 C285.1,402.7 285.2,404.4 285.3,405.0" fill="none" stroke-width="0.75" /><path d="M286.2,396.9 C286.3,397.5 286.9,399.3 287.1,400.4 C287.3,401.6 287.4,403.4 287.5,403.9" fill="none" stroke-width="0.75" /><path d="M288.4,395.9 C288.5,396.5 289.1,398.2 289.3,399.4 C289.5,400.6 289.6,402.3 289.7,402.9" fill="none" stroke-width="0.75" /><path d="M290.6,394.9 C290.8,395.4 291.3,397.2 291.5,398.4 C291.7,399.5 291.8,401.3 291.9,401.9" fill="none" stroke-width="0.75" /><path d="M292.8,393.8 C292.9,394.4 293.5,396.1 293.7,397.3 C293.9,398.5 294.0,400.2 294.1,400.8" fill="none" stroke-width="0.75" /><path d="M295.0,392.8 C295.1,393.3 295.7,395.1 295.9,396.2 C296.1,397.4 296.2,399.2 296.3,399.8" fill="none" stroke-width="0.75" /><ellipse cx="276.5" cy="405.5" rx="5.2" ry="6.3" transform="rotate(-25 276.5 405.5)" fill="#fff" stroke-width="1.3" /><path d="M273.5,402.0 L277.0,400.0 L280.2,402.5 L280.0,408.0 L277.0,410.5 L273.0,408.5Z" fill="none" stroke-width="0.8" /><path d="M235.8,358.0 L236.5,357.7 L237.3,357.5 L238.1,357.5 L238.9,357.5 L239.8,357.7 L240.6,358.0 L241.5,358.4 L242.4,358.9 L243.3,359.5 L244.1,360.2 L244.9,361.0 L245.7,361.9 L246.5,362.9 L247.2,363.9 L247.8,365.0 L248.4,366.1 L248.9,367.3 L249.3,368.4 L249.7,369.6 L250.0,370.8 L250.2,372.0 L250.3,373.2 L250.3,374.3 L250.3,375.3 L250.1,376.4 L249.9,377.3 L249.6,378.2 L249.2,379.0 L248.8,379.7 L248.2,380.3 L247.6,380.8 L247.0,381.2 L222.5,393.5 L221.8,393.8 L221.0,394.0 L220.2,394.0 L219.4,394.0 L218.5,393.8 L217.7,393.5 L216.8,393.1 L215.9,392.6 L215.0,392.0 L214.2,391.3 L213.4,390.5 L212.6,389.6 L211.8,388.6 L211.1,387.6 L210.5,386.5 L209.9,385.4 L209.4,384.2 L209.0,383.1 L208.6,381.9 L208.3,380.7 L208.1,379.5 L208.0,378.3 L208.0,377.2 L208.0,376.2 L208.2,375.1 L208.4,374.2 L208.7,373.3 L209.1,372.5 L209.5,371.8 L210.1,371.2 L210.7,370.7 L211.3,370.3Z" fill="#fff" stroke-width="1.35" /><ellipse cx="216.9" cy="381.9" rx="7.8" ry="12.9" transform="rotate(-25 216.9 381.9)" fill="#fff" stroke-width="1.35" /><ellipse cx="217.5" cy="381.8" rx="5.5" ry="9.5" transform="rotate(-25 217.5 381.8)" fill="#fff" stroke-width="0.9" /><path d="M213.1,376.1 L213.5,375.9 L213.9,375.8 L214.4,375.8 L214.8,375.8 L215.3,375.9 L215.7,376.0 L216.2,376.2 L216.6,376.5 L217.1,376.8 L217.5,377.1 L218.0,377.5 L218.4,378.0 L218.8,378.5 L219.1,379.0 L219.5,379.5 L219.8,380.1 L220.0,380.7 L220.2,381.3 L220.4,381.9 L220.6,382.5 L220.7,383.1 L220.7,383.7 L220.7,384.3 L220.7,384.9 L220.6,385.4 L220.5,385.9 L220.3,386.4 L220.1,386.8 L219.8,387.1 L219.5,387.5 L219.2,387.7 L218.9,387.9 L197.1,398.8 L196.7,399.0 L196.3,399.1 L195.8,399.1 L195.4,399.1 L194.9,399.0 L194.5,398.9 L194.0,398.7 L193.6,398.4 L193.1,398.1 L192.7,397.8 L192.2,397.4 L191.8,396.9 L191.4,396.4 L191.1,395.9 L190.7,395.4 L190.4,394.8 L190.2,394.2 L190.0,393.6 L189.8,393.0 L189.6,392.4 L189.5,391.8 L189.5,391.2 L189.5,390.6 L189.5,390.0 L189.6,389.5 L189.7,389.0 L189.9,388.5 L190.1,388.1 L190.4,387.8 L190.7,387.4 L191.0,387.2 L191.3,387.0Z" fill="#fff" stroke-width="1.35" /><ellipse cx="194.2" cy="392.9" rx="4.2" ry="6.6" transform="rotate(-25 194.2 392.9)" fill="#fff" stroke-width="1.35" /><path d="M195.5,389.0 C195.8,389.7 197.2,391.6 197.5,393.0 C197.8,394.4 197.1,396.8 197.0,397.5" fill="none" stroke-width="0.6" /><g transform="translate(-1.3,115.4)"><path d="M235.8,358.0 L236.5,357.7 L237.3,357.5 L238.1,357.5 L238.9,357.5 L239.8,357.7 L240.6,358.0 L241.5,358.4 L242.4,358.9 L243.3,359.5 L244.1,360.2 L244.9,361.0 L245.7,361.9 L246.5,362.9 L247.2,363.9 L247.8,365.0 L248.4,366.1 L248.9,367.3 L249.3,368.4 L249.7,369.6 L250.0,370.8 L250.2,372.0 L250.3,373.2 L250.3,374.3 L250.3,375.3 L250.1,376.4 L249.9,377.3 L249.6,378.2 L249.2,379.0 L248.8,379.7 L248.2,380.3 L247.6,380.8 L247.0,381.2 L222.5,393.5 L221.8,393.8 L221.0,394.0 L220.2,394.0 L219.4,394.0 L218.5,393.8 L217.7,393.5 L216.8,393.1 L215.9,392.6 L215.0,392.0 L214.2,391.3 L213.4,390.5 L212.6,389.6 L211.8,388.6 L211.1,387.6 L210.5,386.5 L209.9,385.4 L209.4,384.2 L209.0,383.1 L208.6,381.9 L208.3,380.7 L208.1,379.5 L208.0,378.3 L208.0,377.2 L208.0,376.2 L208.2,375.1 L208.4,374.2 L208.7,373.3 L209.1,372.5 L209.5,371.8 L210.1,371.2 L210.7,370.7 L211.3,370.3Z" fill="#fff" stroke-width="1.35" /><ellipse cx="216.9" cy="381.9" rx="7.8" ry="12.9" transform="rotate(-25 216.9 381.9)" fill="#fff" stroke-width="1.35" /><ellipse cx="217.5" cy="381.8" rx="5.5" ry="9.5" transform="rotate(-25 217.5 381.8)" fill="#fff" stroke-width="0.9" /><path d="M213.1,376.1 L213.5,375.9 L213.9,375.8 L214.4,375.8 L214.8,375.8 L215.3,375.9 L215.7,376.0 L216.2,376.2 L216.6,376.5 L217.1,376.8 L217.5,377.1 L218.0,377.5 L218.4,378.0 L218.8,378.5 L219.1,379.0 L219.5,379.5 L219.8,380.1 L220.0,380.7 L220.2,381.3 L220.4,381.9 L220.6,382.5 L220.7,383.1 L220.7,383.7 L220.7,384.3 L220.7,384.9 L220.6,385.4 L220.5,385.9 L220.3,386.4 L220.1,386.8 L219.8,387.1 L219.5,387.5 L219.2,387.7 L218.9,387.9 L197.1,398.8 L196.7,399.0 L196.3,399.1 L195.8,399.1 L195.4,399.1 L194.9,399.0 L194.5,398.9 L194.0,398.7 L193.6,398.4 L193.1,398.1 L192.7,397.8 L192.2,397.4 L191.8,396.9 L191.4,396.4 L191.1,395.9 L190.7,395.4 L190.4,394.8 L190.2,394.2 L190.0,393.6 L189.8,393.0 L189.6,392.4 L189.5,391.8 L189.5,391.2 L189.5,390.6 L189.5,390.0 L189.6,389.5 L189.7,389.0 L189.9,388.5 L190.1,388.1 L190.4,387.8 L190.7,387.4 L191.0,387.2 L191.3,387.0Z" fill="#fff" stroke-width="1.35" /><ellipse cx="194.2" cy="392.9" rx="4.2" ry="6.6" transform="rotate(-25 194.2 392.9)" fill="#fff" stroke-width="1.35" /><path d="M195.5,389.0 C195.8,389.7 197.2,391.6 197.5,393.0 C197.8,394.4 197.1,396.8 197.0,397.5" fill="none" stroke-width="0.6" /></g><g transform="translate(31.2,270)"><path d="M240.4,168.7 L244.7,165.1 L250.5,164.4 L254.9,167.3 L297.1,186.2 L302.2,188.4 L304.4,193.5 L302.9,199.3 L303.6,226.9 L302.2,233.5 L297.1,236.4 L289.8,235.6 L262.0,250.0 L244.0,244.0 L243.0,225.0 L244.0,213.8 L241.1,208.0 L241.8,202.2 L241.1,177.5Z" fill="#fff" stroke-width="1.35" stroke-linejoin="round"/><path d="M253.0,171.5 L297.1,190.5" fill="none" stroke-width="0.9" /><path d="M300.5,195.0 L301.0,229.0" fill="none" stroke-width="0.7" /><ellipse cx="245.5" cy="173.1" rx="5" ry="5.6" transform="rotate(-20 245.5 173.1)" fill="#fff" stroke-width="1.35" /><ellipse cx="245.5" cy="173.1" rx="3" ry="3.6" transform="rotate(-20 245.5 173.1)" fill="#fff" stroke-width="1.0" /><ellipse cx="292.7" cy="194.9" rx="5" ry="5.6" transform="rotate(-20 292.7 194.9)" fill="#fff" stroke-width="1.35" /><ellipse cx="292.7" cy="194.9" rx="3" ry="3.6" transform="rotate(-20 292.7 194.9)" fill="#fff" stroke-width="1.0" /><ellipse cx="245.5" cy="207.3" rx="5" ry="5.6" transform="rotate(-20 245.5 207.3)" fill="#fff" stroke-width="1.35" /><ellipse cx="245.5" cy="207.3" rx="3" ry="3.6" transform="rotate(-20 245.5 207.3)" fill="#fff" stroke-width="1.0" /><ellipse cx="292.7" cy="228.4" rx="5" ry="5.6" transform="rotate(-20 292.7 228.4)" fill="#fff" stroke-width="1.35" /><ellipse cx="292.7" cy="228.4" rx="3" ry="3.6" transform="rotate(-20 292.7 228.4)" fill="#fff" stroke-width="1.0" /><path d="M244.7,226.9 C246.6,221.0 253.0,198.0 256.4,191.3 C259.8,184.6 262.0,187.0 265.1,186.9 C268.2,186.8 272.2,187.9 275.3,190.5 C278.4,193.1 282.1,198.1 284.0,202.2 C285.9,206.3 286.6,211.7 286.9,215.3 C287.1,218.9 286.4,220.1 285.5,224.0 C284.6,227.9 286.7,233.5 281.5,238.5 C276.3,243.5 258.9,251.4 254.4,254.0Z" fill="#fff" stroke-width="1.0" /><path d="M266.0,193.0 C267.7,193.7 273.2,194.5 276.0,197.0 C278.8,199.5 281.5,204.2 283.0,208.0 C284.5,211.8 284.7,218.0 285.0,220.0" fill="none" stroke-width="0.6" /><path d="M244.6,228.6 L245.6,227.9 L246.7,227.4 L247.8,227.0 L248.9,226.7 L250.1,226.5 L251.3,226.5 L252.5,226.6 L253.7,226.8 L254.9,227.1 L256.0,227.6 L257.1,228.2 L258.2,228.9 L259.2,229.6 L260.1,230.5 L261.0,231.5 L261.8,232.5 L262.4,233.7 L263.0,234.8 L263.5,236.1 L263.8,237.3 L264.1,238.6 L264.2,239.9 L264.2,241.1 L264.1,242.4 L263.9,243.7 L263.5,244.9 L263.1,246.0 L262.5,247.1 L261.9,248.1 L261.1,249.0 L260.3,249.9 L259.4,250.6 L257.6,251.9 L256.6,252.6 L255.5,253.1 L254.4,253.5 L253.3,253.8 L252.1,254.0 L250.9,254.0 L249.7,253.9 L248.5,253.7 L247.3,253.4 L246.2,252.9 L245.1,252.3 L244.0,251.6 L243.0,250.9 L242.1,250.0 L241.2,249.0 L240.4,248.0 L239.8,246.8 L239.2,245.7 L238.7,244.4 L238.4,243.2 L238.1,241.9 L238.0,240.6 L238.0,239.4 L238.1,238.1 L238.3,236.8 L238.7,235.6 L239.1,234.5 L239.7,233.4 L240.3,232.4 L241.1,231.5 L241.9,230.6 L242.8,229.9Z" fill="#fff" stroke-width="1.35" /><ellipse cx="250.2" cy="240.9" rx="12" ry="13.3" transform="rotate(-24 250.2 240.9)" fill="#fff" stroke-width="1.35" /><ellipse cx="248.8" cy="241.35" rx="7.2" ry="8.4" transform="rotate(-24 248.8 241.35)" fill="#fff" stroke-width="1.3" /><path d="M246.0,229.6 L247.0,229.3 L248.0,229.0 L249.0,228.9 L250.1,228.8 L251.2,228.9 L252.2,229.1 L253.3,229.4 L254.3,229.8 L255.3,230.3 L256.2,230.9 L257.1,231.6 L258.0,232.4 L258.7,233.3 L259.4,234.2 L260.1,235.2 L260.6,236.3 L261.0,237.4 L261.3,238.5 L261.6,239.7 L261.7,240.8 L261.7,242.0 L261.7,243.1 L261.5,244.2 L261.2,245.3 L260.8,246.3 L260.3,247.3 L259.8,248.2 L259.1,249.1 L258.4,249.8 L257.6,250.5 L256.7,251.1 L255.8,251.6" fill="none" stroke-width="0.6" /><path d="M285.4,236.0 L294.1,240.9" fill="none" stroke-width="0.8" /><path d="M297.0,242.3 L301.9,244.8 L298.0,247.7" fill="none" stroke-width="0.8" /><path d="M273.8,255.9 L290.7,246.2 L294.1,247.2 L295.6,253.0 L295.1,254.5 L278.6,264.6Z" fill="#fff" stroke-width="1.35" /><path d="M277.0,256.0 C277.2,256.7 278.2,258.7 278.5,260.0 C278.8,261.3 278.9,263.3 279.0,264.0" fill="none" stroke-width="0.7" /><path d="M279.6,254.5 C279.9,255.2 280.8,257.2 281.1,258.5 C281.4,259.8 281.5,261.8 281.6,262.5" fill="none" stroke-width="0.7" /><path d="M282.2,253.0 C282.4,253.7 283.4,255.7 283.7,257.0 C284.0,258.3 284.1,260.3 284.2,261.0" fill="none" stroke-width="0.7" /><path d="M284.8,251.5 C285.1,252.2 286.0,254.2 286.3,255.5 C286.6,256.8 286.7,258.8 286.8,259.5" fill="none" stroke-width="0.7" /><path d="M287.4,250.0 C287.6,250.7 288.6,252.7 288.9,254.0 C289.2,255.3 289.3,257.3 289.4,258.0" fill="none" stroke-width="0.7" /><path d="M290.0,248.5 C290.2,249.2 291.2,251.2 291.5,252.5 C291.8,253.8 291.9,255.8 292.0,256.5" fill="none" stroke-width="0.7" /><path d="M292.6,247.0 C292.9,247.7 293.8,249.7 294.1,251.0 C294.4,252.3 294.5,254.3 294.6,255.0" fill="none" stroke-width="0.7" /><path d="M260.7,259.3 L267.0,254.5 L272.3,255.0 L278.6,266.6 L276.7,272.4 L270.0,274.8 L263.1,271.4 L260.2,263.7Z" fill="#fff" stroke-width="1.35" stroke-linejoin="round"/><path d="M263.1,259.8 L270.9,258.8 L275.2,268.0 L270.0,274.8" fill="none" stroke-width="0.8" /><path d="M270.9,258.8 L272.3,255.0" fill="none" stroke-width="0.8" /></g><line x1="267.7" y1="515.6" x2="279" y2="511" stroke-width="0.9" /><path d="M130.4,491.3 L126.3,484.1 L263.4,413.5 L268.7,420.3" fill="none" stroke-width="1.4" /><line x1="198.7" y1="433.3" x2="203.5" y2="444.7" stroke-width="1.3" /><line x1="64.2" y1="364.5" x2="69" y2="373" stroke-width="1.3" /><line x1="77.5" y1="486.8" x2="90.6" y2="498.4" stroke-width="1.3" /><line x1="141.8" y1="490.1" x2="147.6" y2="495.2" stroke-width="1.3" /><line x1="212" y1="462.4" x2="223" y2="479.3" stroke-width="1.3" /><line x1="265.3" y1="430.9" x2="273.8" y2="441.8" stroke-width="1.3" /><line x1="321" y1="528" x2="323.4" y2="542.3" stroke-width="1.3" /><path d="M252.0,481.7 L259.2,478.0 L259.2,524.1 L277.4,515.6" fill="none" stroke-width="0.9" stroke-dasharray="9,2,2,2"/><path d="M318.5,509.6 L331.9,515.6 L327.0,519.0" fill="none" stroke-width="0.9" /><line x1="135.7" y1="536.2" x2="150.3" y2="530.2" stroke-width="0.9" /><text x="131" y="489.6" font-size="8.6" font-family="Liberation Sans" fill="#444" stroke="none">5</text><text x="203.1" y="458.2" font-size="8.6" font-family="Liberation Sans" fill="#444" stroke="none">6</text><text x="256.4" y="428.4" font-size="8.6" font-family="Liberation Sans" fill="#444" stroke="none">4</text><rect x="52.9" y="352.9" width="8.2" height="11.0" fill="#ff7070" stroke="none"/><path d="M57.8,355.5 L57.8,361.5 M55.8,357.1 L57.8,355.5" stroke="#000" stroke-width="1.3" fill="none" stroke-linecap="butt"/><rect x="86.2" y="500" width="10.2" height="11.5" fill="#ffff00" stroke="none"/><text x="91.3" y="508.7" font-size="8.5" text-anchor="middle" font-family="Liberation Sans" fill="#000" stroke="#000" stroke-width="0.25">2</text><rect x="189.9" y="421.9" width="9.1" height="11.9" fill="#00ff00" stroke="none"/><text x="194.4" y="431.0" font-size="8.5" text-anchor="middle" font-family="Liberation Sans" fill="#000" stroke="#000" stroke-width="0.25">3</text><rect x="318.5" y="543.5" width="9.2" height="9.7" fill="#ffff00" stroke="none"/><text x="323.1" y="550.4" font-size="8.5" text-anchor="middle" font-family="Liberation Sans" fill="#000" stroke="#000" stroke-width="0.25">7</text><rect x="17.5" y="512.5" width="72" height="45" fill="#fff" stroke="#555" stroke-width="1.2"/><path d="M41.2,538.8 L41.1,535.5 L41.4,533.6 L42.2,531.8 L44.0,530.8 L61.2,522.5 L80.4,531.9" fill="none" stroke-width="0.8" /><path d="M61.8,524.5 L79.3,533.6" fill="none" stroke-width="0.8" /><path d="M49,527.5 L52,526 L54,531 L51,534 Z" fill="#333" stroke-width="0.6" /><ellipse cx="51.5" cy="531" rx="2.2" ry="3" transform="rotate(-20 51.5 531)" fill="none" stroke-width="0.8" /><path d="M62,526.3 L70,526 L71,532 L66,534 Z" fill="#fff" stroke-width="0.8" /><path d="M62,526.3 L67,525 L70,526.5 L64,528 Z" fill="#222" stroke-width="0.6" /><ellipse cx="65.5" cy="530" rx="2.4" ry="3" transform="rotate(-20 65.5 530)" fill="none" stroke-width="1.0" /><path d="M56.7,539.2 L70.8,546.6" fill="none" stroke-width="0.8" /><path d="M70.2,544.3 L73.6,546.0" fill="none" stroke-width="0.8" /><path d="M67.4,541.5 L71.9,536.4 L82.7,541.5" fill="none" stroke-width="0.8" /><path d="M64.6,534.7 L66.9,536.4" fill="none" stroke-width="0.7" /><path d="M58.0,537.0 L65.0,532.5" fill="none" stroke-width="0.7" stroke-dasharray="2,1.5"/><path d="M40.3,541.5 L53.3,536.4 L55.5,538.7 L42.0,546.6Z" fill="#fff" stroke-width="1.1" /><path d="M45.0,539.5 C45.1,539.9 45.6,541.2 45.8,542.0 C46.0,542.8 46.1,544.1 46.2,544.5" fill="none" stroke-width="0.7" /><path d="M47.2,538.6 C47.3,539.0 47.8,540.3 48.0,541.1 C48.2,541.9 48.3,543.2 48.4,543.6" fill="none" stroke-width="0.7" /><path d="M49.4,537.7 C49.5,538.1 50.0,539.4 50.2,540.2 C50.4,541.0 50.5,542.3 50.6,542.7" fill="none" stroke-width="0.7" /><path d="M51.6,536.8 C51.7,537.2 52.2,538.5 52.4,539.3 C52.6,540.1 52.7,541.4 52.8,541.8" fill="none" stroke-width="0.7" /><path d="M53.8,535.9 C53.9,536.3 54.4,537.6 54.6,538.4 C54.8,539.2 54.9,540.5 55.0,540.9" fill="none" stroke-width="0.7" /><ellipse cx="36.5" cy="547" rx="5.8" ry="7" transform="rotate(-25 36.5 547)" fill="#fff" stroke-width="1.5" /><path d="M33.5,543.0 L37.0,541.5 L40.0,545.0 L39.0,550.5 L35.5,552.0 L32.5,548.0Z" fill="none" stroke-width="0.9" /></svg>
<div id="tb" class="a"></div>
<div id="tbg" class="a"></div>
<svg class="a" style="left:0;top:0" width="60" height="200" viewBox="0 0 60 200"><defs><linearGradient id="bg" x1="0" y1="0" x2="0" y2="1"><stop offset="0" stop-color="#f2f2f2"/><stop offset="1" stop-color="#d2d2d2"/></linearGradient><linearGradient id="bg2" x1="0" y1="0" x2="1" y2="0"><stop offset="0" stop-color="#ffffff"/><stop offset="0.6" stop-color="#d8d8d8"/><stop offset="1" stop-color="#ababab"/></linearGradient></defs><rect x="22.8" y="34.8" width="14.4" height="14.4" rx="1" fill="url(#bg)" stroke="#8a8a8a" stroke-width="0.8"/><rect x="23.7" y="35.7" width="12.6" height="12.6" fill="none" stroke="#fcfcfc" stroke-width="0.9" opacity="0.9"/><path d="M37,39.5 L39.6,42 L37,44.5 Z" fill="#eeeeee" stroke="#9a9a9a" stroke-width="0.5"/><rect x="25" y="41" width="10" height="2" fill="#555"/><rect x="29" y="37" width="2" height="10" fill="#555"/><rect x="22.8" y="57.8" width="14.4" height="14.4" rx="1" fill="url(#bg)" stroke="#8a8a8a" stroke-width="0.8"/><rect x="23.7" y="58.7" width="12.6" height="12.6" fill="none" stroke="#fcfcfc" stroke-width="0.9" opacity="0.9"/><path d="M23,62.5 L20.4,65 L23,67.5 Z" fill="#eeeeee" stroke="#9a9a9a" stroke-width="0.5"/><rect x="25" y="64" width="10" height="2" fill="#555"/><rect x="22.8" y="86.8" width="14.4" height="14.4" rx="1" fill="url(#bg)" stroke="#8a8a8a" stroke-width="0.8"/><rect x="23.7" y="87.7" width="12.6" height="12.6" fill="none" stroke="#fcfcfc" stroke-width="0.9" opacity="0.9"/><rect x="24.5" y="93.2" width="11" height="1.6" fill="#d8d8d8"/><rect x="29.2" y="88.5" width="1.6" height="11" fill="#d8d8d8"/><rect x="24.3" y="88.2" width="3.5" height="3.5" fill="#747474"/><rect x="25.3" y="89.2" width="1.5" height="1.5" fill="#8e8e8e"/><rect x="32.1" y="88.2" width="3.5" height="3.5" fill="#747474"/><rect x="33.1" y="89.2" width="1.5" height="1.5" fill="#8e8e8e"/><rect x="24.3" y="96.1" width="3.5" height="3.5" fill="#747474"/><rect x="25.3" y="97.1" width="1.5" height="1.5" fill="#8e8e8e"/><rect x="32.1" y="96.1" width="3.5" height="3.5" fill="#747474"/><rect x="33.1" y="97.1" width="1.5" height="1.5" fill="#8e8e8e"/><rect x="22.8" y="109.8" width="14.4" height="14.4" rx="1" fill="url(#bg)" stroke="#8a8a8a" stroke-width="0.8"/><rect x="23.7" y="110.7" width="12.6" height="12.6" fill="none" stroke="#fcfcfc" stroke-width="0.9" opacity="0.9"/><rect x="26.5" y="113.5" width="7" height="7" fill="#ddd" stroke="#555" stroke-width="1.1"/><rect x="22" y="162.5" width="4" height="4.3" fill="#e6e6e6" stroke="#888" stroke-width="0.6"/><rect x="22" y="167.5" width="4" height="4.3" fill="#e6e6e6" stroke="#888" stroke-width="0.6"/><rect x="22" y="172.5" width="4" height="4.3" fill="#e6e6e6" stroke="#888" stroke-width="0.6"/><rect x="27" y="162.5" width="11.5" height="14.5" fill="url(#bg2)"/><path d="M27,162.5 L27,177" stroke="#fff" stroke-width="1"/><rect x="29" y="169" width="6.5" height="2" fill="#444"/><path d="M35,166.5 L38.5,170 L35,173.5 Z" fill="#444"/></svg>
<div class="a hdr"></div>
<div class="a sel"></div>
<div class="hl" style="top:61px"></div>
<div class="hl" style="top:81px"></div>
<div class="hl" style="top:101px"></div>
<div class="hl" style="top:121px"></div>
<div class="hl" style="top:141px"></div>
<div class="vw" style="left:414px;top:22px;height:39px;background:#fff"></div>
<div class="vl" style="left:414px;top:61px;height:81px"></div>
<div class="vw" style="left:479px;top:22px;height:39px;background:#fff"></div>
<div class="vl" style="left:479px;top:61px;height:81px"></div>
<div class="vw" style="left:514px;top:22px;height:39px;background:#fff"></div>
<div class="vl" style="left:514px;top:61px;height:81px"></div>
<div class="vw" style="left:598px;top:22px;height:39px;background:#fff"></div>
<div class="vl" style="left:598px;top:61px;height:81px"></div>
<div class="vw" style="left:633px;top:22px;height:39px;background:#fff"></div>
<div class="vl" style="left:633px;top:61px;height:81px"></div>
<div class="vw" style="left:717px;top:22px;height:39px;background:#fff"></div>
<div class="vl" style="left:717px;top:61px;height:81px"></div>
<div class="vw" style="left:840px;top:22px;height:39px;background:#fff"></div>
<div class="vl" style="left:840px;top:61px;height:81px"></div>
<div class="vw" style="left:892px;top:22px;height:39px;background:#fff"></div>
<div class="vl" style="left:892px;top:61px;height:81px"></div>
<div class="vw" style="left:934px;top:22px;height:39px;background:#fff"></div>
<div class="vl" style="left:934px;top:61px;height:81px"></div>
<div class="th" style="left:420px;letter-spacing:-0.15px">Symbol(s)</div>
<div class="th" style="left:484px;letter-spacing:0.7px">Item</div>
<div class="th" style="left:519px;letter-spacing:0.2px">Parts No.</div>
<div class="th" style="left:604px;letter-spacing:1.0px">Qty.</div>
<div class="th" style="left:639px;letter-spacing:0.18px">Latest Part No.</div>
<div class="th" style="left:722px;letter-spacing:0.55px">Description</div>
<div class="th" style="left:846px;letter-spacing:0.6px">Cut Out</div>
<div class="th" style="left:898px;letter-spacing:0.6px">Cut In</div>
<div class="th" style="left:940px;letter-spacing:0.4px">Comment</div>
<div class="td w" style="left:482px;top:42px">1</div>
<div class="td w" style="left:517px;top:42px">2614B166</div>
<div class="td w" style="left:601px;top:42px">1</div>
<div class="td w" style="left:637px;top:42px">2614B166</div>
<div class="td w" style="left:721px;top:42px">BELT</div>
<div class="td" style="left:482px;top:62px">1</div>
<div class="td" style="left:517px;top:62px">2614B665</div>
<div class="td" style="left:601px;top:62px">1</div>
<div class="td" style="left:637px;top:62px">2614B665</div>
<div class="td" style="left:721px;top:62px">BELT</div>
<div class="td" style="left:482px;top:82px">2</div>
<div class="td" style="left:517px;top:82px">3115C113</div>
<div class="td" style="left:601px;top:82px">1</div>
<div class="td" style="left:637px;top:82px">3115C113</div>
<div class="td" style="left:721px;top:82px;letter-spacing:-0.55px">FAN DRIVE PULLEY</div>
<div class="td" style="left:482px;top:102px">3</div>
<div class="td" style="left:517px;top:102px">4113H073</div>
<div class="td" style="left:601px;top:102px">1</div>
<div class="td" style="left:637px;top:102px">4113H073</div>
<div class="td" style="left:721px;top:102px;letter-spacing:-0.17px">FAN DRIVE HOUSING</div>
<div class="td" style="left:482px;top:122px">7</div>
<div class="td" style="left:517px;top:122px">2314J014</div>
<div class="td" style="left:601px;top:122px">4</div>
<div class="td" style="left:637px;top:122px">2314J014</div>
<div class="td" style="left:721px;top:122px;letter-spacing:-0.5px">SCREW</div>
<svg class="a" style="left:0;top:0" width="1070" height="160" viewBox="0 0 1070 160"><defs><radialGradient id="ig" cx="0.45" cy="0.4" r="0.6"><stop offset="0" stop-color="#ffffff"/><stop offset="0.55" stop-color="#e4eef8"/><stop offset="1" stop-color="#a9c6e4"/></radialGradient></defs><path d="M367.83,50.24 L368.87,50.50 L368.81,51.96 L367.74,52.12 L367.24,53.17 L367.80,54.09 L366.72,55.07 L365.85,54.43 L364.76,54.83 L364.50,55.87 L363.04,55.81 L362.88,54.74 L361.83,54.24 L360.91,54.80 L359.93,53.72 L360.57,52.85 L360.17,51.76 L359.13,51.50 L359.19,50.04 L360.26,49.88 L360.76,48.83 L360.20,47.91 L361.28,46.93 L362.15,47.57 L363.24,47.17 L363.50,46.13 L364.96,46.19 L365.12,47.26 L366.17,47.76 L367.09,47.20 L368.07,48.28 L367.43,49.15Z" fill="#79ad2b" stroke="#79ad2b" stroke-width="0.6" stroke-linejoin="round"/><circle cx="364" cy="51" r="1.7" fill="#3399ff"/><g transform="translate(374,44)" fill="none" stroke="#5f7390" stroke-linecap="round" stroke-linejoin="round"><path d="M0.5,0.5 L2.8,1.8 L5,10.2 L14.3,10.2" stroke-width="1.3"/><path d="M2.8,2.2 L15.5,2.6 L14,8.3 L4.5,8.5" stroke-width="1.2"/><path d="M6.3,3 L6.8,8 M8.3,3 L8.6,8 M10.3,3 L10.4,8 M12.3,3 L12.2,8" stroke-width="0.8" opacity="0.9"/><path d="M4,5.3 L15,5.3" stroke-width="0.6" opacity="0.7"/><circle cx="5" cy="12.3" r="1" fill="#5f7390" stroke="none"/><circle cx="13" cy="12.3" r="1" fill="#5f7390" stroke="none"/></g><circle cx="400" cy="51" r="7" fill="url(#ig)"/><rect x="399.2" y="47" width="1.7" height="1.6" fill="#2f5f9f"/><rect x="399.2" y="49.8" width="1.7" height="5.2" fill="#2f5f9f"/><path d="M367.83,70.24 L368.87,70.50 L368.81,71.96 L367.74,72.12 L367.24,73.17 L367.80,74.09 L366.72,75.07 L365.85,74.43 L364.76,74.83 L364.50,75.87 L363.04,75.81 L362.88,74.74 L361.83,74.24 L360.91,74.80 L359.93,73.72 L360.57,72.85 L360.17,71.76 L359.13,71.50 L359.19,70.04 L360.26,69.88 L360.76,68.83 L360.20,67.91 L361.28,66.93 L362.15,67.57 L363.24,67.17 L363.50,66.13 L364.96,66.19 L365.12,67.26 L366.17,67.76 L367.09,67.20 L368.07,68.28 L367.43,69.15Z" fill="#79ad2b" stroke="#79ad2b" stroke-width="0.6" stroke-linejoin="round"/><circle cx="364" cy="71" r="1.7" fill="#eef6e2"/><g transform="translate(374,64)" fill="none" stroke="#3c68a3" stroke-linecap="round" stroke-linejoin="round"><path d="M0.5,0.5 L2.8,1.8 L5,10.2 L14.3,10.2" stroke-width="1.3"/><path d="M2.8,2.2 L15.5,2.6 L14,8.3 L4.5,8.5" stroke-width="1.2"/><path d="M6.3,3 L6.8,8 M8.3,3 L8.6,8 M10.3,3 L10.4,8 M12.3,3 L12.2,8" stroke-width="0.8" opacity="0.9"/><path d="M4,5.3 L15,5.3" stroke-width="0.6" opacity="0.7"/><circle cx="5" cy="12.3" r="1" fill="#3c68a3" stroke="none"/><circle cx="13" cy="12.3" r="1" fill="#3c68a3" stroke="none"/></g><circle cx="400" cy="71" r="7" fill="url(#ig)"/><rect x="399.2" y="67" width="1.7" height="1.6" fill="#2f5f9f"/><rect x="399.2" y="69.8" width="1.7" height="5.2" fill="#2f5f9f"/><path d="M367.83,90.24 L368.87,90.50 L368.81,91.96 L367.74,92.12 L367.24,93.17 L367.80,94.09 L366.72,95.07 L365.85,94.43 L364.76,94.83 L364.50,95.87 L363.04,95.81 L362.88,94.74 L361.83,94.24 L360.91,94.80 L359.93,93.72 L360.57,92.85 L360.17,91.76 L359.13,91.50 L359.19,90.04 L360.26,89.88 L360.76,88.83 L360.20,87.91 L361.28,86.93 L362.15,87.57 L363.24,87.17 L363.50,86.13 L364.96,86.19 L365.12,87.26 L366.17,87.76 L367.09,87.20 L368.07,88.28 L367.43,89.15Z" fill="#79ad2b" stroke="#79ad2b" stroke-width="0.6" stroke-linejoin="round"/><circle cx="364" cy="91" r="1.7" fill="#eef6e2"/><g transform="translate(374,84)" fill="none" stroke="#3c68a3" stroke-linecap="round" stroke-linejoin="round"><path d="M0.5,0.5 L2.8,1.8 L5,10.2 L14.3,10.2" stroke-width="1.3"/><path d="M2.8,2.2 L15.5,2.6 L14,8.3 L4.5,8.5" stroke-width="1.2"/><path d="M6.3,3 L6.8,8 M8.3,3 L8.6,8 M10.3,3 L10.4,8 M12.3,3 L12.2,8" stroke-width="0.8" opacity="0.9"/><path d="M4,5.3 L15,5.3" stroke-width="0.6" opacity="0.7"/><circle cx="5" cy="12.3" r="1" fill="#3c68a3" stroke="none"/><circle cx="13" cy="12.3" r="1" fill="#3c68a3" stroke="none"/></g><circle cx="400" cy="91" r="7" fill="url(#ig)"/><rect x="399.2" y="87" width="1.7" height="1.6" fill="#2f5f9f"/><rect x="399.2" y="89.8" width="1.7" height="5.2" fill="#2f5f9f"/><path d="M365.14,108.38 L366.08,108.58 L366.02,109.80 L365.07,109.92 L364.66,110.78 L365.18,111.59 L364.28,112.41 L363.52,111.82 L362.62,112.14 L362.42,113.08 L361.20,113.02 L361.08,112.07 L360.22,111.66 L359.41,112.18 L358.59,111.28 L359.18,110.52 L358.86,109.62 L357.92,109.42 L357.98,108.20 L358.93,108.08 L359.34,107.22 L358.82,106.41 L359.72,105.59 L360.48,106.18 L361.38,105.86 L361.58,104.92 L362.80,104.98 L362.92,105.93 L363.78,106.34 L364.59,105.82 L365.41,106.72 L364.82,107.48Z" fill="#3a6ee0" stroke="#3a6ee0" stroke-width="0.5" stroke-linejoin="round"/><circle cx="362" cy="109" r="1.3" fill="#e6eeff"/><path d="M370.64,113.38 L371.58,113.58 L371.52,114.80 L370.57,114.92 L370.16,115.78 L370.68,116.59 L369.78,117.41 L369.02,116.82 L368.12,117.14 L367.92,118.08 L366.70,118.02 L366.58,117.07 L365.72,116.66 L364.91,117.18 L364.09,116.28 L364.68,115.52 L364.36,114.62 L363.42,114.42 L363.48,113.20 L364.43,113.08 L364.84,112.22 L364.32,111.41 L365.22,110.59 L365.98,111.18 L366.88,110.86 L367.08,109.92 L368.30,109.98 L368.42,110.93 L369.28,111.34 L370.09,110.82 L370.91,111.72 L370.32,112.48Z" fill="#78b02a" stroke="#78b02a" stroke-width="0.5" stroke-linejoin="round"/><circle cx="367.5" cy="114" r="1.3" fill="#eef6e2"/><g transform="translate(374,104)" fill="none" stroke="#3c68a3" stroke-linecap="round" stroke-linejoin="round"><path d="M0.5,0.5 L2.8,1.8 L5,10.2 L14.3,10.2" stroke-width="1.3"/><path d="M2.8,2.2 L15.5,2.6 L14,8.3 L4.5,8.5" stroke-width="1.2"/><path d="M6.3,3 L6.8,8 M8.3,3 L8.6,8 M10.3,3 L10.4,8 M12.3,3 L12.2,8" stroke-width="0.8" opacity="0.9"/><path d="M4,5.3 L15,5.3" stroke-width="0.6" opacity="0.7"/><circle cx="5" cy="12.3" r="1" fill="#3c68a3" stroke="none"/><circle cx="13" cy="12.3" r="1" fill="#3c68a3" stroke="none"/></g><circle cx="400" cy="111" r="7" fill="url(#ig)"/><rect x="399.2" y="107" width="1.7" height="1.6" fill="#2f5f9f"/><rect x="399.2" y="109.8" width="1.7" height="5.2" fill="#2f5f9f"/><path d="M367.83,130.24 L368.87,130.50 L368.81,131.96 L367.74,132.12 L367.24,133.17 L367.80,134.09 L366.72,135.07 L365.85,134.43 L364.76,134.83 L364.50,135.87 L363.04,135.81 L362.88,134.74 L361.83,134.24 L360.91,134.80 L359.93,133.72 L360.57,132.85 L360.17,131.76 L359.13,131.50 L359.19,130.04 L360.26,129.88 L360.76,128.83 L360.20,127.91 L361.28,126.93 L362.15,127.57 L363.24,127.17 L363.50,126.13 L364.96,126.19 L365.12,127.26 L366.17,127.76 L367.09,127.20 L368.07,128.28 L367.43,129.15Z" fill="#79ad2b" stroke="#79ad2b" stroke-width="0.6" stroke-linejoin="round"/><circle cx="364" cy="131" r="1.7" fill="#eef6e2"/><g transform="translate(374,124)" fill="none" stroke="#3c68a3" stroke-linecap="round" stroke-linejoin="round"><path d="M0.5,0.5 L2.8,1.8 L5,10.2 L14.3,10.2" stroke-width="1.3"/><path d="M2.8,2.2 L15.5,2.6 L14,8.3 L4.5,8.5" stroke-width="1.2"/><path d="M6.3,3 L6.8,8 M8.3,3 L8.6,8 M10.3,3 L10.4,8 M12.3,3 L12.2,8" stroke-width="0.8" opacity="0.9"/><path d="M4,5.3 L15,5.3" stroke-width="0.6" opacity="0.7"/><circle cx="5" cy="12.3" r="1" fill="#3c68a3" stroke="none"/><circle cx="13" cy="12.3" r="1" fill="#3c68a3" stroke="none"/></g><circle cx="400" cy="131" r="7" fill="url(#ig)"/><rect x="399.2" y="127" width="1.7" height="1.6" fill="#2f5f9f"/><rect x="399.2" y="129.8" width="1.7" height="5.2" fill="#2f5f9f"/><defs><radialGradient id="lens" cx="0.4" cy="0.35" r="0.7"><stop offset="0" stop-color="#f4f4f4"/><stop offset="0.7" stop-color="#c8ccd2"/><stop offset="1" stop-color="#a8b0b8"/></radialGradient></defs><g><rect x="371.5" y="24.5" width="13" height="13" fill="#1262b8" stroke="#1a74cc" stroke-width="1"/><rect x="372.3" y="25.3" width="11.6" height="1.4" fill="#eef4ff"/><rect x="372.3" y="27.8" width="2.4" height="9" fill="#f4f8ff"/><path d="M373.6,29 v0.8 M373.6,31 v0.8 M373.6,33 v0.8 M373.6,35 v0.8" stroke="#1a5fae" stroke-width="0.9"/><path d="M382.3,35.3 L386.3,39.3" stroke="#1d6cc4" stroke-width="2.6" stroke-linecap="round"/><path d="M382.6,35.6 L386,39" stroke="#8cc0f0" stroke-width="0.9" stroke-dasharray="1,1"/><circle cx="379.4" cy="32.1" r="4.9" fill="#1c68bc"/><circle cx="379.4" cy="32.1" r="4.1" fill="url(#lens)"/><path d="M376.6,30.6 A3.2,2.4 0 0 1 381.8,29.6" stroke="#fff" stroke-width="1.1" fill="none"/></g><g fill="none" stroke="#111" stroke-width="1"><path d="M423.5,72 C419.5,71.5 419,68.5 419.5,66.5 C420.5,63.5 423,63 426,63 C429.5,63 432.5,64 432.5,67.5 C432.5,70.5 429.5,71.8 427,72 L423.3,76.5 Z" fill="#fff"/></g><rect x="425.2" y="64" width="1.8" height="4.8" fill="#111"/><rect x="425.2" y="69.6" width="1.8" height="1.6" fill="#111"/><g stroke="#222" stroke-width="0.9" fill="none"><path d="M435.5,65.5 L435.5,76 L442.5,75.5 L449.5,76 L449.5,65.5" fill="#f4f4f4"/><path d="M437,64.3 L437,74.5 M442.5,66 L442.5,75.5 M448,64.3 L448,74.5" stroke="#999" stroke-width="0.7"/><path d="M437,64.3 Q440,64 442.5,66 Q445,64 448,64.3" stroke="#555"/><circle cx="443.5" cy="69" r="3.8" fill="#fafafa" stroke="#333" stroke-width="1"/><path d="M446,72 L449.5,76.5" stroke="#111" stroke-width="1.5"/></g></svg>
<svg class="a" style="left:0;top:0" width="1070" height="619" viewBox="0 0 1070 619"><circle cx="1039" cy="579" r="6.8" fill="none" stroke="#1f5ca6" stroke-width="2.8"/><path d="M1034,584 L1044,574" stroke="#1f5ca6" stroke-width="2.6"/><circle cx="1055" cy="579" r="6.8" fill="none" stroke="#1f5ca6" stroke-width="2.8"/><path d="M1050,574 L1060,584" stroke="#1f5ca6" stroke-width="2.6"/><circle cx="1039" cy="595" r="6.8" fill="none" stroke="#1f5ca6" stroke-width="2.8"/><path d="M1034,590 L1044,600" stroke="#1f5ca6" stroke-width="2.6"/><circle cx="1055" cy="595" r="6.8" fill="none" stroke="#1f5ca6" stroke-width="2.8"/><path d="M1050,600 L1060,590" stroke="#1f5ca6" stroke-width="2.6"/><path d="M1047,570.5 L1049,574 L1047,578 L1045,574 Z M1047,604 L1049,600.5 L1047,596.5 L1045,600.5 Z M1030.8,587 L1034,585 L1038,587 L1034,589 Z M1063.2,587 L1060,585 L1056,587 L1060,589 Z" fill="#1f5ca6"/><text x="1028.5" y="616.3" font-family="Liberation Sans" font-weight="bold" font-size="10.4" fill="#1f5ca6" stroke="#1f5ca6" stroke-width="0.3" letter-spacing="-0.05">Perkins</text><circle cx="1066.5" cy="609.5" r="0.9" fill="#1f5ca6" opacity="0.6"/></svg>
</body></html>
